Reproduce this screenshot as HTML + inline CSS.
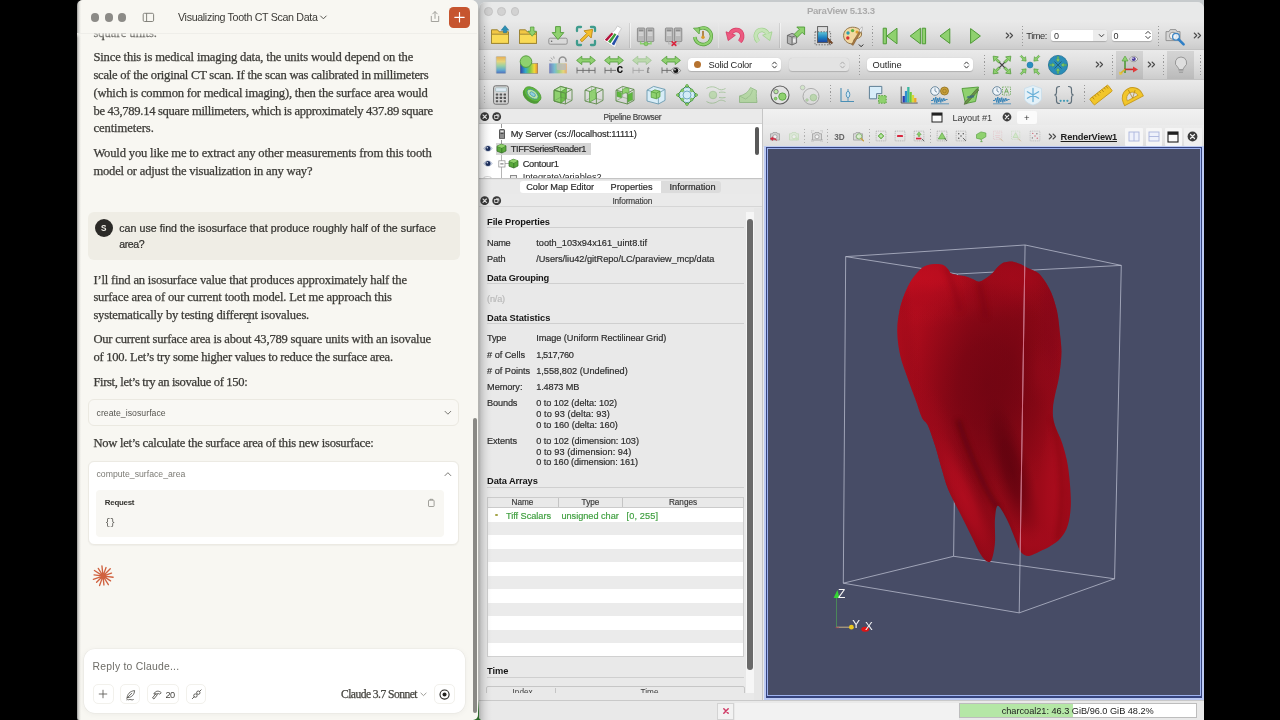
<!DOCTYPE html>
<html lang="en"><head><meta charset="utf-8"><title>Visualizing Tooth CT Scan Data</title>
<style>
html,body{margin:0;padding:0;background:#000;}
body{width:1280px;height:720px;position:relative;overflow:hidden;font-family:"Liberation Sans",sans-serif;}
.b{position:absolute;box-sizing:border-box;display:block;}
.t{position:absolute;white-space:pre;margin:0;}
</style></head><body><div id="root" style="position:absolute;left:0;top:0;width:1280px;height:720px;will-change:transform;">
<div class="b" style="left:470px;top:0px;width:734.2px;height:720px;background:linear-gradient(180deg,#c6cacc 0,#c6cacc 4px,#b4b4b1 12px,#b4b4b1 700px,#2f6b2c 712px,#2f6b2c 720px);"></div>
<div class="b" style="left:77px;top:0px;width:400.7px;height:720px;background:#f8f7f2;border-radius:6px 7px 5px 2px;"></div>
<div class="b" style="left:77px;top:0px;width:3.5px;height:720px;background:linear-gradient(90deg,rgba(60,60,60,0.5),rgba(90,90,90,0.18) 45%,rgba(0,0,0,0));border-radius:6px 0 0 2px;"></div>
<div class="t" style="left:93.40px;top:21px;font-family:'Liberation Serif', serif;font-size:12.6px;line-height:24px;color:#3b3a36;letter-spacing:-0.006px;-webkit-text-stroke:0.25px #3b3a36;">square units.</div>
<div class="t" style="left:93.40px;top:45px;font-family:'Liberation Serif', serif;font-size:12.6px;line-height:24px;color:#3b3a36;letter-spacing:-0.161px;-webkit-text-stroke:0.25px #3b3a36;">Since this is medical imaging data, the units would depend on the</div>
<div class="t" style="left:93.40px;top:63px;font-family:'Liberation Serif', serif;font-size:12.6px;line-height:24px;color:#3b3a36;letter-spacing:-0.235px;-webkit-text-stroke:0.25px #3b3a36;">scale of the original CT scan. If the scan was calibrated in millimeters</div>
<div class="t" style="left:93.40px;top:81px;font-family:'Liberation Serif', serif;font-size:12.6px;line-height:24px;color:#3b3a36;letter-spacing:-0.207px;-webkit-text-stroke:0.25px #3b3a36;">(which is common for medical imaging), then the surface area would</div>
<div class="t" style="left:93.40px;top:99px;font-family:'Liberation Serif', serif;font-size:12.6px;line-height:24px;color:#3b3a36;letter-spacing:-0.302px;-webkit-text-stroke:0.25px #3b3a36;">be 43,789.14 square millimeters, which is approximately 437.89 square</div>
<div class="t" style="left:93.40px;top:116px;font-family:'Liberation Serif', serif;font-size:12.6px;line-height:24px;color:#3b3a36;letter-spacing:-0.067px;-webkit-text-stroke:0.25px #3b3a36;">centimeters.</div>
<div class="t" style="left:93.40px;top:141px;font-family:'Liberation Serif', serif;font-size:12.6px;line-height:24px;color:#3b3a36;letter-spacing:-0.174px;-webkit-text-stroke:0.25px #3b3a36;">Would you like me to extract any other measurements from this tooth</div>
<div class="t" style="left:93.40px;top:159px;font-family:'Liberation Serif', serif;font-size:12.6px;line-height:24px;color:#3b3a36;letter-spacing:-0.211px;-webkit-text-stroke:0.25px #3b3a36;">model or adjust the visualization in any way?</div>
<div class="t" style="left:93.40px;top:268px;font-family:'Liberation Serif', serif;font-size:12.6px;line-height:24px;color:#3b3a36;letter-spacing:-0.194px;-webkit-text-stroke:0.25px #3b3a36;">I’ll find an isosurface value that produces approximately half the</div>
<div class="t" style="left:93.40px;top:285px;font-family:'Liberation Serif', serif;font-size:12.6px;line-height:24px;color:#3b3a36;letter-spacing:-0.169px;-webkit-text-stroke:0.25px #3b3a36;">surface area of our current tooth model. Let me approach this</div>
<div class="t" style="left:93.40px;top:303px;font-family:'Liberation Serif', serif;font-size:12.6px;line-height:24px;color:#3b3a36;letter-spacing:-0.180px;-webkit-text-stroke:0.25px #3b3a36;">systematically by testing different isovalues.</div>
<div class="t" style="left:93.40px;top:327px;font-family:'Liberation Serif', serif;font-size:12.6px;line-height:24px;color:#3b3a36;letter-spacing:-0.205px;-webkit-text-stroke:0.25px #3b3a36;">Our current surface area is about 43,789 square units with an isovalue</div>
<div class="t" style="left:93.40px;top:345px;font-family:'Liberation Serif', serif;font-size:12.6px;line-height:24px;color:#3b3a36;letter-spacing:-0.267px;-webkit-text-stroke:0.25px #3b3a36;">of 100. Let’s try some higher values to reduce the surface area.</div>
<div class="t" style="left:93.40px;top:370px;font-family:'Liberation Serif', serif;font-size:12.6px;line-height:24px;color:#3b3a36;letter-spacing:-0.360px;-webkit-text-stroke:0.25px #3b3a36;">First, let’s try an isovalue of 150:</div>
<div class="t" style="left:93.40px;top:431px;font-family:'Liberation Serif', serif;font-size:12.6px;line-height:24px;color:#3b3a36;letter-spacing:-0.256px;-webkit-text-stroke:0.25px #3b3a36;">Now let’s calculate the surface area of this new isosurface:</div>
<svg class="b" style="left:245px;top:312px;" width="8" height="12" viewBox="0 0 8 12"><path d="M2 1.5h4M4 1.5v9M2 10.5h4" stroke="#555" stroke-width="0.9" fill="none"/></svg>
<div class="b" style="left:77px;top:0px;width:400.7px;height:33.2px;background:#f8f7f2;border-radius:6px 7px 0 0;"></div>
<div class="b" style="left:77px;top:0px;width:3.5px;height:33.2px;background:linear-gradient(90deg,rgba(60,60,60,0.5),rgba(90,90,90,0.18) 45%,rgba(0,0,0,0));border-radius:6px 0 0 0;"></div>
<div class="b" style="left:77px;top:33.2px;width:400.5px;height:5px;background:linear-gradient(180deg,rgba(248,247,242,0.85),rgba(248,247,242,0));"></div>
<div class="b" style="left:78px;top:33px;width:399px;height:1.2px;background:linear-gradient(180deg,rgba(0,0,0,0.07),rgba(0,0,0,0.0));"></div>
<div class="b" style="left:91.30000000000001px;top:13.4px;width:8.2px;height:8.2px;background:#8c8b87;border-radius:50%;"></div>
<div class="b" style="left:104.5px;top:13.4px;width:8.2px;height:8.2px;background:#8c8b87;border-radius:50%;"></div>
<div class="b" style="left:117.9px;top:13.4px;width:8.2px;height:8.2px;background:#8c8b87;border-radius:50%;"></div>
<svg class="b" style="left:142px;top:11.5px;" width="13" height="11" viewBox="0 0 13 11"><rect x="1.2" y="1.3" width="10.4" height="8.2" rx="1.3" fill="none" stroke="#77766f" stroke-width="0.9"/><path d="M4.6 1.3v8.2" stroke="#77766f" stroke-width="0.9"/></svg>
<div class="t" style="left:178.00px;top:6px;font-family:'Liberation Sans', sans-serif;font-size:10.7px;line-height:22px;color:#3b3a36;letter-spacing:-0.341px;">Visualizing Tooth CT Scan Data</div>
<svg class="b" style="left:319px;top:14px;" width="9" height="7" viewBox="0 0 9 7"><path d="M1.6 2l2.8 2.8L7.2 2" stroke="#55544f" stroke-width="1" fill="none" stroke-linecap="round" stroke-linejoin="round"/></svg>
<svg class="b" style="left:429px;top:10px;" width="12" height="14" viewBox="0 0 12 14"><path d="M2.3 6.3v5.2h7.4V6.3M6 8.4V1.8M3.7 3.9L6 1.6l2.3 2.3" stroke="#9a9993" stroke-width="0.9" fill="none" stroke-linecap="round" stroke-linejoin="round"/></svg>
<div class="b" style="left:448.6px;top:7px;width:21px;height:20.5px;background:#c6552f;border-radius:4.5px;"></div>
<svg class="b" style="left:448.6px;top:7px;" width="21" height="20.5" viewBox="0 0 21 20.5"><path d="M10.5 5.6v9.4M5.8 10.3h9.4" stroke="#fff" stroke-width="1.15" stroke-linecap="round"/></svg>
<div class="b" style="left:88.2px;top:212.2px;width:371.5px;height:47.4px;background:#efede5;border-radius:6px;"></div>
<div class="b" style="left:94.7px;top:218.6px;width:18.3px;height:18.3px;background:#2b2a27;border-radius:50%;"></div>
<div class="t" style="left:101.12px;top:219px;font-family:'Liberation Sans', sans-serif;font-size:8.2px;line-height:19px;color:#f3f1ea;font-weight:700;">S</div>
<div class="t" style="left:119.20px;top:217px;font-family:'Liberation Sans', sans-serif;font-size:10.6px;line-height:22px;color:#2f2e2b;letter-spacing:0.060px;-webkit-text-stroke:0.2px #2f2e2b;">can use find the isosurface that produce roughly half of the surface</div>
<div class="t" style="left:119.20px;top:233px;font-family:'Liberation Sans', sans-serif;font-size:10.6px;line-height:22px;color:#2f2e2b;letter-spacing:-0.402px;-webkit-text-stroke:0.2px #2f2e2b;">area?</div>
<div class="b" style="left:88.2px;top:399.3px;width:371px;height:26.5px;background:#f9f8f4;border-radius:6px;border:0.8px solid #ebe9e1;"></div>
<div class="t" style="left:96.50px;top:403px;font-family:'Liberation Sans', sans-serif;font-size:8.7px;line-height:20px;color:#55544f;letter-spacing:0.037px;">create_isosurface</div>
<svg class="b" style="left:442.5px;top:409px;" width="10" height="8" viewBox="0 0 10 8"><path d="M2 2.3l2.9 2.9 2.9-2.9" stroke="#6b6a65" stroke-width="0.9" fill="none" stroke-linecap="round" stroke-linejoin="round"/></svg>
<div class="b" style="left:88.2px;top:461.2px;width:371px;height:84.3px;background:#ffffff;border-radius:6px;border:0.8px solid #eceae3;box-shadow:0 0.5px 1.5px rgba(0,0,0,0.04);"></div>
<div class="t" style="left:96.50px;top:464px;font-family:'Liberation Sans', sans-serif;font-size:8.7px;line-height:20px;color:#7b7a74;letter-spacing:0.001px;">compute_surface_area</div>
<svg class="b" style="left:442.5px;top:470px;" width="10" height="8" viewBox="0 0 10 8"><path d="M2 5.6l2.9-2.9 2.9 2.9" stroke="#6b6a65" stroke-width="0.9" fill="none" stroke-linecap="round" stroke-linejoin="round"/></svg>
<div class="b" style="left:95.8px;top:490.3px;width:347.8px;height:46.6px;background:#f8f7f3;border-radius:4px;"></div>
<div class="t" style="left:104.80px;top:493px;font-family:'Liberation Sans', sans-serif;font-size:7.9px;line-height:19px;color:#34332f;font-weight:700;letter-spacing:-0.249px;">Request</div>
<div class="t" style="left:105.00px;top:513px;font-family:'Liberation Mono', monospace;font-size:8.8px;line-height:20px;color:#4b4a45;letter-spacing:-0.181px;">{}</div>
<svg class="b" style="left:426.5px;top:497.5px;" width="9" height="10" viewBox="0 0 9 10"><rect x="1.5" y="2.2" width="5.6" height="6.3" rx="0.6" fill="none" stroke="#8b8a84" stroke-width="0.8"/><path d="M3 2.2v-0.9h2.6v0.9" fill="none" stroke="#8b8a84" stroke-width="0.8"/></svg>
<svg class="b" style="left:91.3px;top:564.3px;" width="24" height="24" viewBox="0 0 24 24"><path d="M13.19 12.14L22.13 13.22M13.01 12.65L19.58 16.85M12.63 13.02L17.36 20.68M12.13 13.19L12.94 20.95M11.59 13.13L8.56 21.60M11.14 12.84L5.59 18.31M10.86 12.39L2.35 15.29M10.81 11.86L3.06 10.92M10.99 11.35L3.41 6.51M11.37 10.98L7.27 4.34M11.87 10.81L10.94 1.86M12.41 10.87L15.04 3.53M12.86 11.16L19.27 4.84M13.14 11.61L20.52 9.09" stroke="#d0613f" stroke-width="1.35" stroke-linecap="round" fill="none"/><circle cx="12" cy="12" r="2" fill="#d0613f"/></svg>
<div class="b" style="left:84px;top:649.4px;width:381px;height:64px;background:#ffffff;border-radius:11px;box-shadow:0 1px 6px rgba(0,0,0,0.05),0 0 0 0.6px rgba(0,0,0,0.045);"></div>
<div class="t" style="left:92.60px;top:656px;font-family:'Liberation Sans', sans-serif;font-size:10.4px;line-height:21px;color:#6e6d67;letter-spacing:0.228px;">Reply to Claude...</div>
<div class="b" style="left:92.6px;top:683.8px;width:21.10000000000001px;height:20.3px;background:#fff;border-radius:5px;border:0.8px solid #f2f1ec;"></div>
<div class="b" style="left:119.5px;top:683.8px;width:20.80000000000001px;height:20.3px;background:#fff;border-radius:5px;border:0.8px solid #f2f1ec;"></div>
<div class="b" style="left:146.5px;top:683.8px;width:32.80000000000001px;height:20.3px;background:#fff;border-radius:5px;border:0.8px solid #f2f1ec;"></div>
<div class="b" style="left:185.9px;top:683.8px;width:20.5px;height:20.3px;background:#fff;border-radius:5px;border:0.8px solid #f2f1ec;"></div>
<div class="b" style="left:434.4px;top:683.8px;width:21.100000000000023px;height:20.3px;background:#fff;border-radius:5px;border:0.8px solid #f2f1ec;"></div>
<svg class="b" style="left:97.1px;top:688px;" width="12" height="12" viewBox="0 0 12 12"><path d="M6 2.2v7.600M2.200 6h7.600" stroke="#5a5954" stroke-width="0.85" stroke-linecap="round"/></svg>
<svg class="b" style="left:123.7px;top:687.6px;" width="13" height="13" viewBox="0 0 13 13"><path d="M3.1 9.7C3.3 6.400 5.500 3.200 10.600 2.600 10.400 6.200 8.200 9.200 4.300 9.600zM2.700 10.200L7.800 5.300M2.800 11.700c0.800-0.500 1.300 0.300 2.100 0s1.300-0.400 2.100 0 1.400 0.200 2.300-0.100" stroke="#4a4944" stroke-width="0.8" fill="none" stroke-linecap="round" stroke-linejoin="round"/></svg>
<svg class="b" style="left:150.3px;top:687.7px;" width="13" height="13" viewBox="0 0 13 13"><path d="M4 5.600C5.300 2.700 8.900 2.300 11.200 4.700L9.700 6.200C8.700 5.300 7.700 5.300 6.900 5.900zM6 5.500L2.500 9.900l1.400 1.100 3.500-4.400" stroke="#4a4944" stroke-width="0.85" fill="none" stroke-linecap="round" stroke-linejoin="round"/></svg>
<div class="t" style="left:165.60px;top:685px;font-family:'Liberation Sans', sans-serif;font-size:9.2px;line-height:20px;color:#45443f;letter-spacing:-0.617px;">20</div>
<svg class="b" style="left:190.2px;top:687.6px;" width="13" height="13" viewBox="0 0 13 13"><path d="M2.300 10.700l1.900-1.900M9.600 3.400l1.500-1.500" stroke="#4a4944" stroke-width="0.85" fill="none" stroke-linecap="round"/><circle cx="5.400" cy="7.600" r="1.700" fill="none" stroke="#4a4944" stroke-width="0.85"/><circle cx="8.300" cy="4.700" r="1.700" fill="none" stroke="#4a4944" stroke-width="0.85"/></svg>
<div class="t" style="left:341.00px;top:683px;font-family:'Liberation Serif', serif;font-size:11.6px;line-height:23px;color:#45443f;letter-spacing:-0.556px;-webkit-text-stroke:0.25px #45443f;">Claude 3.7 Sonnet</div>
<svg class="b" style="left:418.6px;top:690.5px;" width="9" height="7" viewBox="0 0 9 7"><path d="M1.9 2.1l2.6 2.5 2.6-2.5" stroke="#8b8a84" stroke-width="0.85" fill="none" stroke-linecap="round" stroke-linejoin="round"/></svg>
<svg class="b" style="left:437.9px;top:687.6px;" width="13" height="13" viewBox="0 0 13 13"><circle cx="6.55" cy="6.55" r="4.55" fill="none" stroke="#23221f" stroke-width="1.1"/><circle cx="6.55" cy="6.55" r="2" fill="#23221f"/></svg>
<div class="b" style="left:472.7px;top:418.2px;width:4px;height:294.5px;background:#8a8985;border-radius:2px;"></div>
<div class="b" style="left:479.2px;top:2px;width:725.0px;height:718px;background:#e9e9e9;border-radius:7px 7px 0 4px;"></div>
<div class="b" style="left:479.2px;top:2px;width:725.0px;height:20px;background:#e8e9e9;border-radius:7px 7px 0 0;"></div>
<div class="b" style="left:483.90000000000003px;top:7.199999999999999px;width:8.8px;height:8.8px;background:#d2d2d2;border-radius:50%;border:0.5px solid #c4c4c4;"></div>
<div class="b" style="left:497.20000000000005px;top:7.199999999999999px;width:8.8px;height:8.8px;background:#d2d2d2;border-radius:50%;border:0.5px solid #c4c4c4;"></div>
<div class="b" style="left:510.6px;top:7.199999999999999px;width:8.8px;height:8.8px;background:#d2d2d2;border-radius:50%;border:0.5px solid #c4c4c4;"></div>
<div class="t" style="left:806.90px;top:0px;font-family:'Liberation Sans', sans-serif;font-size:9.6px;line-height:21px;color:#ababab;font-weight:700;letter-spacing:-0.266px;">ParaView 5.13.3</div>
<div class="b" style="left:479.2px;top:20px;width:725.0px;height:30px;background:linear-gradient(180deg,#eaeaea 0%,#e2e2e2 35%,#d5d5d5 75%,#cbcbcb 100%);"></div>
<div class="b" style="left:479.2px;top:49.2px;width:725.0px;height:0.8px;background:#c2c2c2;"></div>
<div class="b" style="left:479.2px;top:50px;width:725.0px;height:30px;background:linear-gradient(180deg,#eaeaea 0%,#e2e2e2 35%,#d5d5d5 75%,#cbcbcb 100%);"></div>
<div class="b" style="left:479.2px;top:79.2px;width:725.0px;height:0.8px;background:#c2c2c2;"></div>
<div class="b" style="left:479.2px;top:80px;width:725.0px;height:29px;background:linear-gradient(180deg,#eaeaea 0%,#e2e2e2 35%,#d5d5d5 75%,#cbcbcb 100%);"></div>
<div class="b" style="left:479.2px;top:108.2px;width:725.0px;height:0.8px;background:#c2c2c2;"></div>
<div class="b" style="left:483.7px;top:26px;width:1.2px;height:18px;background-image:repeating-linear-gradient(180deg,#b5b5b5 0 1.2px,transparent 1.2px 3.2px);"></div>
<div class="b" style="left:483.7px;top:56px;width:1.2px;height:18px;background-image:repeating-linear-gradient(180deg,#b5b5b5 0 1.2px,transparent 1.2px 3.2px);"></div>
<div class="b" style="left:483.7px;top:86px;width:1.2px;height:17px;background-image:repeating-linear-gradient(180deg,#b5b5b5 0 1.2px,transparent 1.2px 3.2px);"></div>
<div class="b" style="left:629.0px;top:23px;width:0.8px;height:25px;background:rgba(0,0,0,0.09);"></div>
<div class="b" style="left:629.8px;top:23px;width:0.8px;height:25px;background:rgba(255,255,255,0.5);"></div>
<div class="b" style="left:717.6px;top:23px;width:0.8px;height:25px;background:rgba(0,0,0,0.09);"></div>
<div class="b" style="left:718.4px;top:23px;width:0.8px;height:25px;background:rgba(255,255,255,0.5);"></div>
<div class="b" style="left:779.3000000000001px;top:23px;width:0.8px;height:25px;background:rgba(0,0,0,0.09);"></div>
<div class="b" style="left:780.1px;top:23px;width:0.8px;height:25px;background:rgba(255,255,255,0.5);"></div>
<div class="b" style="left:872.0px;top:26px;width:1.2px;height:20px;background-image:repeating-linear-gradient(180deg,#9a9a9a 0 1.2px,transparent 1.2px 3.2px);"></div>
<div class="b" style="left:1021.8px;top:26px;width:1.2px;height:20px;background-image:repeating-linear-gradient(180deg,#9a9a9a 0 1.2px,transparent 1.2px 3.2px);"></div>
<div class="b" style="left:1158.1px;top:26px;width:1.2px;height:20px;background-image:repeating-linear-gradient(180deg,#9a9a9a 0 1.2px,transparent 1.2px 3.2px);"></div>
<div class="b" style="left:858.9px;top:55px;width:1.2px;height:20px;background-image:repeating-linear-gradient(180deg,#9a9a9a 0 1.2px,transparent 1.2px 3.2px);"></div>
<div class="b" style="left:983.8px;top:55px;width:1.2px;height:20px;background-image:repeating-linear-gradient(180deg,#9a9a9a 0 1.2px,transparent 1.2px 3.2px);"></div>
<div class="b" style="left:1112.2px;top:55px;width:1.2px;height:20px;background-image:repeating-linear-gradient(180deg,#9a9a9a 0 1.2px,transparent 1.2px 3.2px);"></div>
<div class="b" style="left:1163.1px;top:55px;width:1.2px;height:20px;background-image:repeating-linear-gradient(180deg,#9a9a9a 0 1.2px,transparent 1.2px 3.2px);"></div>
<div class="b" style="left:1200.3px;top:55px;width:1.2px;height:20px;background-image:repeating-linear-gradient(180deg,#9a9a9a 0 1.2px,transparent 1.2px 3.2px);"></div>
<div class="b" style="left:830.2px;top:85px;width:1.2px;height:19px;background-image:repeating-linear-gradient(180deg,#9a9a9a 0 1.2px,transparent 1.2px 3.2px);"></div>
<div class="b" style="left:1083.7px;top:85px;width:1.2px;height:19px;background-image:repeating-linear-gradient(180deg,#9a9a9a 0 1.2px,transparent 1.2px 3.2px);"></div>
<div class="b" style="left:1115.5px;top:51px;width:27.8px;height:28px;background:rgba(0,0,0,0.09);"></div>
<div class="b" style="left:1167.4px;top:51px;width:26.2px;height:28px;background:rgba(0,0,0,0.09);"></div>
<div class="b" style="left:688.4px;top:58px;width:92.20000000000005px;height:13px;background:#ffffff;border-radius:3.5px;box-shadow:0 0.5px 1px rgba(0,0,0,0.18);"></div>
<svg class="b" style="left:770.8000000000001px;top:59.5px;" width="7" height="10" viewBox="0 0 7 10"><path d="M1.5 4L3.5 1.9 5.5 4M1.5 6L3.5 8.1 5.5 6" stroke="#333" stroke-width="0.95" fill="none" stroke-linecap="round" stroke-linejoin="round"/></svg>
<div class="b" style="left:694.0px;top:61.0px;width:7px;height:7px;background:#b5722f;border-radius:50%;"></div>
<div class="t" style="left:708.40px;top:55px;font-family:'Liberation Sans', sans-serif;font-size:9.3px;line-height:20px;color:#262626;letter-spacing:-0.171px;">Solid Color</div>
<div class="b" style="left:789px;top:58px;width:59.700000000000045px;height:13px;background:#e3e3e3;border-radius:3.5px;box-shadow:0 0.5px 1px rgba(0,0,0,0.18);"></div>
<svg class="b" style="left:838.9000000000001px;top:59.5px;" width="7" height="10" viewBox="0 0 7 10"><path d="M1.5 4L3.5 1.9 5.5 4M1.5 6L3.5 8.1 5.5 6" stroke="#aaa" stroke-width="0.95" fill="none" stroke-linecap="round" stroke-linejoin="round"/></svg>
<div class="b" style="left:866.5px;top:58px;width:106.20000000000005px;height:13px;background:#ffffff;border-radius:3.5px;box-shadow:0 0.5px 1px rgba(0,0,0,0.18);"></div>
<svg class="b" style="left:962.9000000000001px;top:59.5px;" width="7" height="10" viewBox="0 0 7 10"><path d="M1.5 4L3.5 1.9 5.5 4M1.5 6L3.5 8.1 5.5 6" stroke="#333" stroke-width="0.95" fill="none" stroke-linecap="round" stroke-linejoin="round"/></svg>
<div class="t" style="left:872.50px;top:55px;font-family:'Liberation Sans', sans-serif;font-size:9.3px;line-height:20px;color:#262626;letter-spacing:-0.067px;">Outline</div>
<div class="t" style="left:1026.30px;top:26px;font-family:'Liberation Sans', sans-serif;font-size:9.3px;line-height:20px;color:#333;letter-spacing:-0.441px;">Time:</div>
<div class="b" style="left:1051.4px;top:29.5px;width:55.8px;height:11.2px;background:#fff;border-radius:2.5px;box-shadow:0 0.5px 1px rgba(0,0,0,0.2);"></div>
<div class="b" style="left:1092.5px;top:29.5px;width:14.7px;height:11.2px;background:#ececec;border-radius:0 2.5px 2.5px 0;"></div>
<svg class="b" style="left:1097.8px;top:32.5px;" width="7" height="6" viewBox="0 0 7 6"><path d="M1.3 1.6l2.2 2.2 2.2-2.2" stroke="#333" stroke-width="0.95" fill="none" stroke-linecap="round" stroke-linejoin="round"/></svg>
<div class="t" style="left:1054.00px;top:26px;font-family:'Liberation Sans', sans-serif;font-size:9px;line-height:20px;color:#333;">0</div>
<div class="b" style="left:1111.6px;top:29.5px;width:40.6px;height:11.2px;background:#fff;border-radius:2.5px;box-shadow:0 0.5px 1px rgba(0,0,0,0.2);"></div>
<div class="t" style="left:1113.50px;top:26px;font-family:'Liberation Sans', sans-serif;font-size:9px;line-height:20px;color:#333;">0</div>
<svg class="b" style="left:1143.5px;top:29px;" width="8" height="12" viewBox="0 0 8 12"><path d="M1.8 4.6L4 2.4l2.2 2.2M1.8 7.4L4 9.6l2.2-2.2" stroke="#333" stroke-width="0.95" fill="none" stroke-linecap="round" stroke-linejoin="round"/></svg>
<svg class="b" style="left:1005.3px;top:31.700000000000003px;" width="9" height="7" viewBox="0 0 9 7"><path d="M1.2 1l2.6 2.5L1.2 6M5 1l2.6 2.5L5 6" stroke="#4a4a4a" stroke-width="1.05" fill="none" stroke-linecap="round" stroke-linejoin="round"/></svg>
<svg class="b" style="left:1192.5px;top:31.700000000000003px;" width="9" height="7" viewBox="0 0 9 7"><path d="M1.2 1l2.6 2.5L1.2 6M5 1l2.6 2.5L5 6" stroke="#4a4a4a" stroke-width="1.05" fill="none" stroke-linecap="round" stroke-linejoin="round"/></svg>
<svg class="b" style="left:1095.0px;top:61.3px;" width="9" height="7" viewBox="0 0 9 7"><path d="M1.2 1l2.6 2.5L1.2 6M5 1l2.6 2.5L5 6" stroke="#4a4a4a" stroke-width="1.05" fill="none" stroke-linecap="round" stroke-linejoin="round"/></svg>
<svg class="b" style="left:1146.5px;top:61.3px;" width="9" height="7" viewBox="0 0 9 7"><path d="M1.2 1l2.6 2.5L1.2 6M5 1l2.6 2.5L5 6" stroke="#4a4a4a" stroke-width="1.05" fill="none" stroke-linecap="round" stroke-linejoin="round"/></svg>
<div class="b" style="left:763px;top:109px;width:441.20000000000005px;height:16.4px;background:linear-gradient(180deg,#f1f1f1,#e9e9e9);"></div>
<div class="b" style="left:763px;top:125.4px;width:441.20000000000005px;height:21.6px;background:linear-gradient(180deg,#ececec,#dedede);"></div>
<svg class="b" style="left:931px;top:111.5px;" width="12" height="11" viewBox="0 0 12 11"><rect x="1" y="1" width="10" height="9" fill="#fafafa" stroke="#222" stroke-width="1"/><rect x="1" y="1" width="10" height="2.6" fill="#222"/></svg>
<div class="t" style="left:952.50px;top:108px;font-family:'Liberation Sans', sans-serif;font-size:9.2px;line-height:20px;color:#3a3a3a;letter-spacing:-0.095px;">Layout #1</div>
<svg class="b" style="left:1002px;top:112px;" width="10" height="10" viewBox="0 0 10 10"><circle cx="5" cy="5" r="4.4" fill="#3d3d3d"/><path d="M3.2 3.2l3.6 3.6M6.8 3.2L3.2 6.8" stroke="#eee" stroke-width="1.1" stroke-linecap="round"/></svg>
<div class="b" style="left:1017px;top:110.5px;width:19.5px;height:13.7px;background:#fbfbfb;border-radius:2px;"></div>
<div class="t" style="left:1024.02px;top:107px;font-family:'Liberation Sans', sans-serif;font-size:9.5px;line-height:21px;color:#333;">+</div>
<svg class="b" style="left:1048.0px;top:133.2px;" width="9" height="7" viewBox="0 0 9 7"><path d="M1.2 1l2.6 2.5L1.2 6M5 1l2.6 2.5L5 6" stroke="#4a4a4a" stroke-width="1.05" fill="none" stroke-linecap="round" stroke-linejoin="round"/></svg>
<div class="b" style="left:804.25px;top:129px;width:1.2px;height:15px;background-image:repeating-linear-gradient(180deg,#b0b0b0 0 1.2px,transparent 1.2px 3.2px);"></div>
<div class="b" style="left:826.75px;top:129px;width:1.2px;height:15px;background-image:repeating-linear-gradient(180deg,#b0b0b0 0 1.2px,transparent 1.2px 3.2px);"></div>
<div class="b" style="left:868.9px;top:129px;width:1.2px;height:15px;background-image:repeating-linear-gradient(180deg,#b0b0b0 0 1.2px,transparent 1.2px 3.2px);"></div>
<div class="b" style="left:929.9px;top:129px;width:1.2px;height:15px;background-image:repeating-linear-gradient(180deg,#b0b0b0 0 1.2px,transparent 1.2px 3.2px);"></div>
<div class="t" style="left:1060.60px;top:127px;font-family:'Liberation Sans', sans-serif;font-size:9.3px;line-height:20px;color:#1d1d1d;font-weight:700;letter-spacing:-0.167px;text-decoration:underline;text-underline-offset:1.2px;">RenderView1</div>
<div class="b" style="left:1125.4px;top:127.5px;width:17.9px;height:18.5px;background:#f6f6f6;border-radius:1px;"></div>
<svg class="b" style="left:1128.3px;top:131.3px;" width="12" height="11" viewBox="0 0 12 11"><rect x="1" y="1" width="10" height="9" fill="#eef1fb" stroke="#a9b4dc" stroke-width="0.9"/><path d="M6 1v9" stroke="#a9b4dc" stroke-width="0.9"/></svg>
<div class="b" style="left:1145.5px;top:127.5px;width:16.8px;height:18.5px;background:#f6f6f6;border-radius:1px;"></div>
<svg class="b" style="left:1147.9px;top:131.3px;" width="12" height="11" viewBox="0 0 12 11"><rect x="1" y="1" width="10" height="9" fill="#eef1fb" stroke="#a9b4dc" stroke-width="0.9"/><path d="M1 5.5h10" stroke="#a9b4dc" stroke-width="0.9"/></svg>
<div class="b" style="left:1164.5px;top:127.5px;width:17px;height:18.5px;background:#f6f6f6;border-radius:1px;"></div>
<svg class="b" style="left:1167px;top:130.7px;" width="12" height="12" viewBox="0 0 12 12"><rect x="1" y="1" width="10" height="10" fill="#fafafa" stroke="#1e1e1e" stroke-width="1.1"/><rect x="1" y="1" width="10" height="2.8" fill="#1e1e1e"/></svg>
<div class="b" style="left:1184px;top:127.5px;width:17.5px;height:18.5px;background:#f0f0f0;border-radius:1px;"></div>
<svg class="b" style="left:1187.2px;top:131.4px;" width="11" height="11" viewBox="0 0 11 11"><circle cx="5.5" cy="5.5" r="4.9" fill="#3d3d3d"/><path d="M3.5 3.5l4 4M7.5 3.5l-4 4" stroke="#eee" stroke-width="1.2" stroke-linecap="round"/></svg>
<div class="b" style="left:479.2px;top:699.6px;width:725.0px;height:20.4px;background:#e9e9e9;border-radius:0 0 0 4px;border-top:0.8px solid #c9c9c9;"></div>
<div class="b" style="left:717.4px;top:703px;width:16.4px;height:17px;background:#f2f2f2;border:0.6px solid #d3d3d3;"></div>
<svg class="b" style="left:721.6px;top:706.7px;" width="8" height="8" viewBox="0 0 8 8"><path d="M1.8 1.8l4.4 4.4M6.2 1.8L1.8 6.2" stroke="#cf3b66" stroke-width="1.5" stroke-linecap="round"/></svg>
<div class="b" style="left:734.5px;top:703px;width:224px;height:17px;background:#f2f2f2;"></div>
<div class="b" style="left:959.2px;top:703.3px;width:237.5px;height:14.7px;background:#ffffff;border:0.7px solid #bdbdbd;"></div>
<div class="b" style="left:959.9px;top:704px;width:113.4px;height:13.3px;background:#b5e7a6;"></div>
<div class="t" style="left:1001.70px;top:701px;font-family:'Liberation Sans', sans-serif;font-size:9.2px;line-height:20px;color:#1b1b1b;letter-spacing:-0.019px;">charcoal21: 46.3 GiB/96.0 GiB 48.2%</div>
<svg class="b" style="left:490.0px;top:24.6px;overflow:visible;" width="22" height="22" viewBox="0 0 22 22"><path d="M1.5 4.8h6l1.6 2h9.400v11.600H1.500z" fill="#f2c744" stroke="#9a8232" stroke-width="1" stroke-linejoin="round"/><path d="M1.500 18.400V9.200h17v9.200z" fill="#f9da55" stroke="#9a8232" stroke-width="0.9" stroke-linejoin="round"/><path d="M15 0.600l3.800 4.600h-2.200v2.600h-3.200V5.200h-2.200z" fill="#2d8fb3" stroke="#1d6f90" stroke-width="0.5"/></svg>
<svg class="b" style="left:518.0px;top:24.6px;overflow:visible;" width="22" height="22" viewBox="0 0 22 22"><path d="M1.5 4.8h6l1.6 2h9.400v11.600H1.500z" fill="#f2c744" stroke="#9a8232" stroke-width="1" stroke-linejoin="round"/><path d="M1.500 18.400V9.200h17v9.200z" fill="#f9da55" stroke="#9a8232" stroke-width="0.9" stroke-linejoin="round"/><path d="M12.4 2h3.6v4.2h2.4l-4.2 5-4.2-5h2.4z" fill="#8fd16f" stroke="#4f9a37" stroke-width="0.7" stroke-linejoin="round"/></svg>
<svg class="b" style="left:546.5px;top:24.6px;overflow:visible;" width="22" height="22" viewBox="0 0 22 22"><rect x="1.8" y="13.2" width="18.4" height="6" rx="1.4" fill="#d9d9d9" stroke="#8b8b8b" stroke-width="0.9"/><circle cx="4.6" cy="16.2" r="0.8" fill="#666"/><path d="M8.6 1.6h4.8v6h3.4L11 14.6 5.2 7.6h3.4z" fill="#8fd16f" stroke="#4f9a37" stroke-width="0.9" stroke-linejoin="round"/></svg>
<svg class="b" style="left:574.7px;top:24.6px;overflow:visible;" width="22" height="22" viewBox="0 0 22 22"><path d="M2 6V3.4C2 2.5 2.5 2 3.4 2H6M16 2h2.6c0.9 0 1.4 0.5 1.4 1.4V6M20 16v2.6c0 0.9-0.5 1.4-1.4 1.4H16M6 20H3.4C2.5 20 2 19.5 2 18.600V16" fill="none" stroke="#3f9c8d" stroke-width="2.3" stroke-linecap="round"/><path d="M5.2 15l6.500-6.500-2.700-2.700 8.600-1.400-1.400 8.600-2.700-2.700-6.500 6.500z" fill="#f5be2b" stroke="#b98716" stroke-width="0.9" stroke-linejoin="round"/></svg>
<svg class="b" style="left:602.5px;top:24.6px;overflow:visible;" width="22" height="22" viewBox="0 0 22 22"><g transform="rotate(32 11 11)"><path d="M8.600 0.6h4.800v5.200l4.400 12.600c0.400 1.200-0.200 2-1.400 2H5.600c-1.200 0-1.800-0.800-1.400-2L8.600 5.800z" fill="#ffffff" stroke="#c9c9c9" stroke-width="0.8"/><path d="M7.200 9.500l-2 9.600h2.600l1.500-9.600z" fill="#b3113a"/><path d="M10 8.500l-0.900 10.600h2.800l0.400-10.600z" fill="#3d9f3a"/><path d="M13.200 8.500l0.100 10.600h2.900l-1-10.600z" fill="#2650a8"/></g></svg>
<svg class="b" style="left:635.0px;top:24.6px;overflow:visible;" width="22" height="22" viewBox="0 0 22 22"><rect x="2.4" y="3" width="7.4" height="13.600" rx="0.8" fill="#b9b9b9" stroke="#7d7d7d" stroke-width="0.8"/><rect x="3.8" y="4.600" width="4.600" height="1.500" fill="#8c8c8c"/><rect x="3.8" y="7.400" width="4.600" height="1.100" fill="#e3e3e3"/><rect x="3.8" y="9.500" width="4.600" height="1.100" fill="#e3e3e3"/><rect x="11.4" y="3" width="7.4" height="13.600" rx="0.8" fill="#b9b9b9" stroke="#7d7d7d" stroke-width="0.8"/><rect x="12.8" y="4.600" width="4.600" height="1.500" fill="#8c8c8c"/><rect x="12.8" y="7.400" width="4.600" height="1.100" fill="#e3e3e3"/><rect x="12.8" y="9.500" width="4.600" height="1.100" fill="#e3e3e3"/><path d="M5.600 16.600v2.200h10.400v-2.200" fill="none" stroke="#8ccf72" stroke-width="1.4"/><circle cx="11" cy="18.800" r="2" fill="#8fd16f" stroke="#4f9a37" stroke-width="0.5"/></svg>
<svg class="b" style="left:663.4px;top:24.6px;overflow:visible;" width="22" height="22" viewBox="0 0 22 22"><rect x="2.4" y="3" width="7.4" height="13.600" rx="0.8" fill="#b9b9b9" stroke="#7d7d7d" stroke-width="0.8"/><rect x="3.8" y="4.600" width="4.600" height="1.500" fill="#8c8c8c"/><rect x="3.8" y="7.400" width="4.600" height="1.100" fill="#e3e3e3"/><rect x="3.8" y="9.500" width="4.600" height="1.100" fill="#e3e3e3"/><rect x="11.4" y="3" width="7.4" height="13.600" rx="0.8" fill="#b9b9b9" stroke="#7d7d7d" stroke-width="0.8"/><rect x="12.8" y="4.600" width="4.600" height="1.500" fill="#8c8c8c"/><rect x="12.8" y="7.400" width="4.600" height="1.100" fill="#e3e3e3"/><rect x="12.8" y="9.500" width="4.600" height="1.100" fill="#e3e3e3"/><path d="M5.600 16.600v2.200h10.400v-2.200" fill="none" stroke="#b9b9b9" stroke-width="1.200"/><path d="M9.200 16.800l3.600 3.600M12.800 16.800l-3.600 3.600" stroke="#d9263f" stroke-width="1.700" stroke-linecap="round"/></svg>
<svg class="b" style="left:691.6px;top:24.6px;overflow:visible;" width="22" height="22" viewBox="0 0 22 22"><path d="M5.300 5.200A8.300 8.300 0 1 1 2.800 12" fill="none" stroke="#4f9a37" stroke-width="3.400"/><path d="M5.300 5.200A8.300 8.300 0 1 1 2.800 12" fill="none" stroke="#8fd16f" stroke-width="2.200"/><path d="M1.400 3.200l6.400-0.400-0.600 6.200z" fill="#8fd16f" stroke="#4f9a37" stroke-width="0.7" stroke-linejoin="round"/><path d="M11 6.500v5" stroke="#a06a1c" stroke-width="1.500" stroke-linecap="round"/><circle cx="11" cy="12.200" r="1.700" fill="#d99a2b"/></svg>
<svg class="b" style="left:724.0px;top:24.6px;overflow:visible;" width="22" height="22" viewBox="0 0 22 22"><path d="M15.800 16.600C20.600 11.200 17.600 4.300 11.400 5C9 5.300 7.400 6.800 6.400 8.800" fill="none" stroke="#d43a62" stroke-width="4.400" stroke-linecap="butt"/><path d="M2 6.800l9.400 3.400-7.200 5.400z" fill="#ec5a80" stroke="#d43a62" stroke-width="0.8" stroke-linejoin="round"/><path d="M15.800 16.600C20.600 11.200 17.600 4.300 11.400 5C9 5.300 7.400 6.800 6.400 8.800" fill="none" stroke="#ec5a80" stroke-width="3.200" stroke-linecap="butt"/></svg>
<svg class="b" style="left:752.4px;top:24.6px;opacity:0.9;overflow:visible;" width="22" height="22" viewBox="0 0 22 22"><g transform="translate(22 0) scale(-1 1)"><path d="M15.800 16.600C20.600 11.200 17.600 4.300 11.400 5C9 5.300 7.400 6.800 6.400 8.800" fill="none" stroke="#98cf83" stroke-width="4.400" stroke-linecap="butt"/><path d="M2 6.800l9.400 3.400-7.200 5.400z" fill="#c3e5b3" stroke="#98cf83" stroke-width="0.8" stroke-linejoin="round"/><path d="M15.800 16.600C20.600 11.200 17.600 4.300 11.400 5C9 5.300 7.400 6.800 6.400 8.800" fill="none" stroke="#c3e5b3" stroke-width="3.200" stroke-linecap="butt"/></g></svg>
<svg class="b" style="left:784.6px;top:24.6px;overflow:visible;" width="22" height="22" viewBox="0 0 22 22"><path d="M2.400 10.400l4.600-2 4.600 1.600v8l-4.600 2-4.600-1.800z" fill="#b5b5b5" stroke="#5c5c5c" stroke-width="0.8" stroke-linejoin="round"/><path d="M2.400 10.400l4.600 1.700 4.600-1.700M7 12.100V20" fill="none" stroke="#5c5c5c" stroke-width="0.8"/><rect x="8" y="13.500" width="2.600" height="4" fill="#ececec"/><path d="M9.200 9.400l5-5-2.400-2.400h7.800v7.800l-2.400-2.400-5 5z" fill="#8fd16f" stroke="#4f9a37" stroke-width="0.9" stroke-linejoin="round"/></svg>
<svg class="b" style="left:812.8px;top:24.6px;overflow:visible;" width="22" height="22" viewBox="0 0 22 22"><defs><linearGradient id="cb1" x1="0" y1="0" x2="0" y2="1"><stop offset="0" stop-color="#dcdcdc"/><stop offset="0.3" stop-color="#dcdcdc"/><stop offset="0.34" stop-color="#5fc3d6"/><stop offset="0.7" stop-color="#1a7fc0"/><stop offset="1" stop-color="#1c3fa0"/></linearGradient></defs><rect x="4.600" y="1.600" width="10" height="16" fill="url(#cb1)" stroke="#555" stroke-width="0.9"/><rect x="2" y="6.800" width="15.600" height="13" fill="none" stroke="#555" stroke-width="0.8" stroke-dasharray="1.400 1.400"/><path d="M14.600 12.600l5.200 5.200-1.200 1.200-1.800-1.800-0.600 2.400z" fill="#7a4a2a" stroke="#4a2a12" stroke-width="0.4"/></svg>
<svg class="b" style="left:841.8px;top:24.6px;overflow:visible;" width="22" height="22" viewBox="0 0 22 22"><path d="M10.600 2.200c-5.200 0-9 3.600-9 8.400 0 4.600 3.800 8.200 8 8.200 2.200 0 2.800-1.200 2.400-2.600-0.400-1.600 0.600-2.800 2.400-2.800 3.200 0 5.200-1.600 5.200-4.400 0-4-4-6.800-9-6.800z" fill="#f2d8a0" stroke="#8a6a3a" stroke-width="0.9"/><circle cx="6" cy="8" r="1.700" fill="#2d9fb0"/><circle cx="10.600" cy="5.600" r="1.700" fill="#5cb040"/><circle cx="5.800" cy="13" r="1.700" fill="#d93030"/><circle cx="15" cy="7" r="1.500" fill="#e0a030"/><path d="M9.500 19.500l7.800-13.500 1.600 0.900-7.800 13.500z" fill="#a87a45" stroke="#6a4a22" stroke-width="0.4"/><path d="M17.200 6.200c0.400-2 1.600-3.600 3-4.400 0.400 1.600 0 3.800-1.400 5.400z" fill="#f6f6f6" stroke="#888" stroke-width="0.5"/><path d="M17.200 19.800l1.900 1.900 1.900-1.900" fill="none" stroke="#222" stroke-width="1" stroke-linecap="round" stroke-linejoin="round"/></svg>
<svg class="b" style="left:878.4px;top:24.6px;overflow:visible;" width="22" height="22" viewBox="0 0 22 22"><path d="M5.200 3.200h3.200v15.600H5.200z" fill="#8fd16f" stroke="#4f9a37" stroke-width="1" stroke-linejoin="round"/><path d="M19 3.200v15.600L8.800 11z" fill="#8fd16f" stroke="#4f9a37" stroke-width="1" stroke-linejoin="round"/></svg>
<svg class="b" style="left:907.4px;top:24.6px;overflow:visible;" width="22" height="22" viewBox="0 0 22 22"><path d="M13.400 3.200v15.600L3.200 11z" fill="#8fd16f" stroke="#4f9a37" stroke-width="1" stroke-linejoin="round"/><path d="M15.200 3.200h3.400v15.600h-3.400z" fill="#8fd16f" stroke="#4f9a37" stroke-width="1" stroke-linejoin="round"/></svg>
<svg class="b" style="left:933.9px;top:24.6px;overflow:visible;" width="22" height="22" viewBox="0 0 22 22"><path d="M15.800 3.600v14.800L6 11z" fill="#8fd16f" stroke="#4f9a37" stroke-width="1" stroke-linejoin="round"/></svg>
<svg class="b" style="left:963.8px;top:24.6px;overflow:visible;" width="22" height="22" viewBox="0 0 22 22"><path d="M6.600 3.600v14.800L16.400 11z" fill="#8fd16f" stroke="#4f9a37" stroke-width="1" stroke-linejoin="round"/></svg>
<svg class="b" style="left:1164.0px;top:24.6px;overflow:visible;" width="22" height="22" viewBox="0 0 22 22"><path d="M2 6.600h3l1.200-2h5.600l1.200 2h3v9H2z" fill="#d6d6d6" stroke="#8b8b8b" stroke-width="0.9" stroke-linejoin="round"/><circle cx="9" cy="10.800" r="3.600" fill="#f3f3f3" stroke="#8b8b8b" stroke-width="0.9"/><circle cx="12" cy="11.800" r="3.400" fill="#e9f3fb" fill-opacity="0.8" stroke="#3e86c4" stroke-width="1.300"/><path d="M14.600 14.400l5 5" stroke="#2f7fc6" stroke-width="2.600" stroke-linecap="round"/></svg>
<svg class="b" style="left:490.0px;top:53.7px;opacity:0.85;overflow:visible;" width="22" height="22" viewBox="0 0 22 22"><defs><linearGradient id="rb1" x1="0" y1="0" x2="0" y2="1"><stop offset="0" stop-color="#e9a23a"/><stop offset="0.3" stop-color="#e6d36a"/><stop offset="0.55" stop-color="#8fcf9a"/><stop offset="0.8" stop-color="#4da0d0"/><stop offset="1" stop-color="#3a59b5"/></linearGradient><linearGradient id="rb2" x1="0" y1="0" x2="1" y2="0"><stop offset="0" stop-color="#2d3fa8"/><stop offset="0.3" stop-color="#33a8c9"/><stop offset="0.55" stop-color="#79c84a"/><stop offset="0.8" stop-color="#f0d83a"/><stop offset="1" stop-color="#e98a2a"/></linearGradient></defs><rect x="6.200" y="2.400" width="9.600" height="17.200" rx="0.800" fill="url(#rb1)" stroke="#9aa" stroke-width="0.5"/></svg>
<svg class="b" style="left:518.0px;top:53.7px;overflow:visible;" width="22" height="22" viewBox="0 0 22 22"><rect x="2.200" y="9.400" width="17.600" height="10" fill="url(#rb2)" stroke="#666" stroke-width="0.4"/><circle cx="8" cy="7.600" r="5.800" fill="#8fd16f" stroke="#4f9a37" stroke-width="0.9"/></svg>
<svg class="b" style="left:546.5px;top:53.7px;opacity:0.9;overflow:visible;" width="22" height="22" viewBox="0 0 22 22"><rect x="2.200" y="9.400" width="17.600" height="10" fill="url(#rb2)" opacity="0.65"/><path d="M12.200 9.400V6.400a3.400 3.400 0 0 1 6.800 0v1.400" fill="none" stroke="#8a8a8a" stroke-width="1.500"/><rect x="9.800" y="9.400" width="9.200" height="6.600" rx="1" fill="#b9b9b9" opacity="0.85"/><path d="M4 3.600l1.600 2M2.400 6.400l2.200 0.800M6.600 2.400l0.600 2.200" stroke="#8a8a8a" stroke-width="0.800"/></svg>
<svg class="b" style="left:574.7px;top:53.7px;overflow:visible;" width="22" height="22" viewBox="0 0 22 22"><path d="M1.600 6.400l5.200-4.200v2.600h8.400V2.200l5.200 4.200-5.200 4.200V8h-8.400v2.600z" fill="#8fd16f" stroke="#4f9a37" stroke-width="0.8" stroke-linejoin="round"/><path d="M2 16.400h18M2 13.400v6M20 13.400v6M8 13.800v5.200M14 13.800v5.200" stroke="#6a6a6a" stroke-width="0.9" fill="none"/></svg>
<svg class="b" style="left:602.5px;top:53.7px;overflow:visible;" width="22" height="22" viewBox="0 0 22 22"><path d="M1.600 6.400l5.200-4.200v2.600h8.400V2.200l5.200 4.200-5.200 4.200V8h-8.400v2.600z" fill="#8fd16f" stroke="#4f9a37" stroke-width="0.8" stroke-linejoin="round"/><path d="M2 16.400h11M2 13.400v6M8 13.800v5.200" stroke="#6a6a6a" stroke-width="0.9" fill="none"/></svg>
<div class="t" style="left:616.60px;top:57px;font-family:'Liberation Sans', sans-serif;font-size:12px;line-height:24px;color:#111;font-weight:700;">c</div>
<svg class="b" style="left:631.0px;top:53.7px;opacity:0.45;overflow:visible;" width="22" height="22" viewBox="0 0 22 22"><path d="M1.600 6.400l5.200-4.200v2.600h8.400V2.200l5.200 4.200-5.200 4.200V8h-8.400v2.600z" fill="#8fd16f" stroke="#4f9a37" stroke-width="0.8" stroke-linejoin="round"/><path d="M2 16.400h11M2 13.400v6M8 13.800v5.200" stroke="#6a6a6a" stroke-width="0.9" fill="none"/></svg>
<div class="t" style="left:646.50px;top:58px;font-family:'Liberation Serif', serif;font-size:11px;line-height:22px;color:#8a8a8a;font-weight:700;font-style:italic;">t</div>
<svg class="b" style="left:659.6px;top:53.7px;overflow:visible;" width="22" height="22" viewBox="0 0 22 22"><path d="M1.600 6.400l5.200-4.200v2.600h8.400V2.200l5.200 4.200-5.200 4.200V8h-8.400v2.600z" fill="#8fd16f" stroke="#4f9a37" stroke-width="0.8" stroke-linejoin="round"/><path d="M2 16.400h9M2 13.400v6M7 13.800v5.200" stroke="#6a6a6a" stroke-width="0.9" fill="none"/><path d="M11 16.600c1.600-2.400 3.200-3.200 4.800-3.200s3.200 0.800 4.800 3.200c-1.600 2.400-3.200 3.200-4.800 3.200s-3.200-0.800-4.800-3.200z" fill="#e9e9e9" stroke="#333" stroke-width="0.5"/><circle cx="15.800" cy="16.600" r="2.500" fill="#151515"/><circle cx="15" cy="15.800" r="0.800" fill="#fff"/></svg>
<svg class="b" style="left:990.5px;top:53.7px;overflow:visible;" width="22" height="22" viewBox="0 0 22 22"><path d="M4.500 4.500l13 13M17.500 4.500l-13 13" stroke="#444" stroke-width="1.100"/><g transform="translate(14.4 7.6) rotate(-45) scale(1)"><path d="M-1 0h4.500v-2.200l4.200 3.200-4.200 3.200V2h-4.500z" transform="translate(0 -1)" fill="#8fd16f" stroke="#4f9a37" stroke-width="0.7" stroke-linejoin="round"/></g><g transform="translate(7.6 7.6) rotate(-135) scale(1)"><path d="M-1 0h4.500v-2.200l4.200 3.200-4.200 3.200V2h-4.500z" transform="translate(0 -1)" fill="#8fd16f" stroke="#4f9a37" stroke-width="0.7" stroke-linejoin="round"/></g><g transform="translate(14.4 14.4) rotate(45) scale(1)"><path d="M-1 0h4.500v-2.200l4.200 3.200-4.200 3.200V2h-4.500z" transform="translate(0 -1)" fill="#8fd16f" stroke="#4f9a37" stroke-width="0.7" stroke-linejoin="round"/></g><g transform="translate(7.6 14.4) rotate(135) scale(1)"><path d="M-1 0h4.500v-2.200l4.200 3.200-4.200 3.200V2h-4.500z" transform="translate(0 -1)" fill="#8fd16f" stroke="#4f9a37" stroke-width="0.7" stroke-linejoin="round"/></g></svg>
<svg class="b" style="left:1018.5px;top:53.7px;overflow:visible;" width="22" height="22" viewBox="0 0 22 22"><g transform="translate(19.5 2.5) rotate(135) scale(0.85)"><path d="M-1 0h4.500v-2.200l4.200 3.200-4.200 3.200V2h-4.500z" transform="translate(0 -1)" fill="#8fd16f" stroke="#4f9a37" stroke-width="0.7" stroke-linejoin="round"/></g><g transform="translate(2.5 2.5) rotate(45) scale(0.85)"><path d="M-1 0h4.500v-2.200l4.200 3.200-4.200 3.200V2h-4.500z" transform="translate(0 -1)" fill="#8fd16f" stroke="#4f9a37" stroke-width="0.7" stroke-linejoin="round"/></g><g transform="translate(19.5 19.5) rotate(-135) scale(0.85)"><path d="M-1 0h4.500v-2.200l4.200 3.200-4.200 3.200V2h-4.500z" transform="translate(0 -1)" fill="#8fd16f" stroke="#4f9a37" stroke-width="0.7" stroke-linejoin="round"/></g><g transform="translate(2.5 19.5) rotate(-45) scale(0.85)"><path d="M-1 0h4.500v-2.200l4.200 3.200-4.200 3.200V2h-4.500z" transform="translate(0 -1)" fill="#8fd16f" stroke="#4f9a37" stroke-width="0.7" stroke-linejoin="round"/></g><circle cx="11" cy="11" r="3" fill="#2a8fc0" stroke="#1a6f9c" stroke-width="0.5"/></svg>
<svg class="b" style="left:1046.5px;top:53.7px;overflow:visible;" width="22" height="22" viewBox="0 0 22 22"><circle cx="11" cy="11" r="9.600" fill="#2a8db8" stroke="#1c6f94" stroke-width="0.8"/><g transform="translate(11 3.2) rotate(90) scale(0.6)"><path d="M-1 0h4.500v-2.200l4.200 3.200-4.200 3.200V2h-4.500z" transform="translate(0 -1)" fill="#8fd16f" stroke="#4f9a37" stroke-width="0.7" stroke-linejoin="round"/></g><g transform="translate(11 18.8) rotate(-90) scale(0.6)"><path d="M-1 0h4.500v-2.200l4.200 3.200-4.200 3.200V2h-4.500z" transform="translate(0 -1)" fill="#8fd16f" stroke="#4f9a37" stroke-width="0.7" stroke-linejoin="round"/></g><g transform="translate(3.2 11) rotate(0) scale(0.6)"><path d="M-1 0h4.500v-2.200l4.200 3.200-4.200 3.200V2h-4.500z" transform="translate(0 -1)" fill="#8fd16f" stroke="#4f9a37" stroke-width="0.7" stroke-linejoin="round"/></g><g transform="translate(18.8 11) rotate(180) scale(0.6)"><path d="M-1 0h4.500v-2.200l4.200 3.200-4.200 3.200V2h-4.500z" transform="translate(0 -1)" fill="#8fd16f" stroke="#4f9a37" stroke-width="0.7" stroke-linejoin="round"/></g><path d="M7.500 7.500l7 7M14.500 7.500l-7 7" stroke="#1c5f7c" stroke-width="0.9"/></svg>
<svg class="b" style="left:1118.4px;top:53.7px;overflow:visible;" width="22" height="22" viewBox="0 0 22 22"><path d="M7 19V5.500" stroke="#4f9a37" stroke-width="1.600"/><path d="M4 7l3-5 3 5z" fill="#8fd16f" stroke="#4f9a37" stroke-width="0.6"/><path d="M6 15.400h10" stroke="#c92a2a" stroke-width="1.600"/><path d="M15 12.400l5 3-5 3z" fill="#e03a3a"/><path d="M7 15.400l-4.500 4" stroke="#d9b32a" stroke-width="1.500"/><path d="M1 17.500l0.600 3.600 3.400-1.200z" fill="#e8c63a"/><path d="M11.500 5c1.400-2 2.800-2.700 4.200-2.700s2.800 0.700 4.200 2.700c-1.400 2-2.800 2.700-4.200 2.700S12.900 7 11.500 5z" fill="#f2f2f2" stroke="#555" stroke-width="0.5"/><circle cx="15.700" cy="5" r="2.100" fill="#4a3a9a"/><circle cx="15" cy="4.300" r="0.700" fill="#fff"/></svg>
<svg class="b" style="left:1169.5px;top:53.7px;overflow:visible;" width="22" height="22" viewBox="0 0 22 22"><path d="M11 3a5.600 5.600 0 0 0-3.400 10.100c0.800 0.700 1.200 1.500 1.200 2.500h4.400c0-1 0.400-1.800 1.200-2.500A5.600 5.600 0 0 0 11 3z" fill="#dedede" stroke="#909090" stroke-width="0.9"/><path d="M9 16.800h4M9.400 18.400h3.200" stroke="#9a9a9a" stroke-width="0.9" stroke-linecap="round"/></svg>
<svg class="b" style="left:490.0px;top:83.6px;overflow:visible;" width="22" height="22" viewBox="0 0 22 22"><rect x="3.600" y="1.800" width="14.800" height="18.400" rx="2" fill="#d4d4d4" stroke="#6f6f6f" stroke-width="1"/><rect x="5.600" y="3.800" width="10.800" height="3.600" rx="0.600" fill="#dfe9f3" stroke="#8aa" stroke-width="0.5"/><rect x="5.8" y="9.4" width="2.400" height="2.100" rx="0.500" fill="#555"/><rect x="9.7" y="9.4" width="2.400" height="2.100" rx="0.500" fill="#555"/><rect x="13.6" y="9.4" width="2.400" height="2.100" rx="0.500" fill="#555"/><rect x="5.8" y="12.8" width="2.400" height="2.100" rx="0.500" fill="#555"/><rect x="9.7" y="12.8" width="2.400" height="2.100" rx="0.500" fill="#555"/><rect x="13.6" y="12.8" width="2.400" height="2.100" rx="0.500" fill="#555"/><rect x="5.8" y="16.2" width="2.400" height="2.100" rx="0.500" fill="#555"/><rect x="9.7" y="16.2" width="2.400" height="2.100" rx="0.500" fill="#555"/><rect x="13.6" y="16.2" width="2.400" height="2.100" rx="0.500" fill="#555"/></svg>
<svg class="b" style="left:520.9px;top:83.6px;overflow:visible;" width="22" height="22" viewBox="0 0 22 22"><g transform="rotate(38 11 11)"><ellipse cx="11" cy="12.600" rx="9.600" ry="5.800" fill="#4f9a37"/><ellipse cx="11" cy="10" rx="9.600" ry="5.800" fill="#5db83d" stroke="#4f9a37" stroke-width="0.8"/><ellipse cx="11" cy="10" rx="6.400" ry="3.700" fill="#b9e6a3" stroke="#3f8a9a" stroke-width="0.7"/><ellipse cx="11" cy="10" rx="3.200" ry="1.700" fill="#8fd0e0" stroke="#3f8a9a" stroke-width="0.6"/></g></svg>
<svg class="b" style="left:552.2px;top:83.6px;overflow:visible;" width="22" height="22" viewBox="0 0 22 22"><path d="M2 6.200L8.600 2.400 14.500 4 9 8z" fill="#b9e6a3" stroke="#4f9a37" stroke-width="0.6"/><path d="M2 6.200L9 8v11.200L2 17z" fill="#8fd16f" stroke="#4f9a37" stroke-width="0.7"/><path d="M9 8l5.500-4v10.600L9 19.200z" fill="#6fbf4c" stroke="#4f9a37" stroke-width="0.6"/><path d="M2 6.200L8.600 2.400 20 5.400v11L13.400 20 2 17z" fill="none" stroke="#5d8a4a" stroke-width="0.9" stroke-linejoin="round"/><path d="M2 6.200l11.400 3 6.600-3.800M13.400 9.200V20" fill="none" stroke="#5d8a4a" stroke-width="0.9"/><path d="M8.600 2.400v10.800L2 17M8.600 13.200L20 16.400" fill="none" stroke="#5d8a4a" stroke-width="0.6" opacity="0.7"/></svg>
<svg class="b" style="left:582.8px;top:83.6px;overflow:visible;" width="22" height="22" viewBox="0 0 22 22"><path d="M2 6.200L8.600 2.400 20 5.400v11L13.400 20 2 17z" fill="none" stroke="#5d8a4a" stroke-width="0.9" stroke-linejoin="round"/><path d="M2 6.200l11.400 3 6.600-3.800M13.400 9.200V20" fill="none" stroke="#5d8a4a" stroke-width="0.9"/><path d="M8.600 2.400v10.800L2 17M8.600 13.200L20 16.400" fill="none" stroke="#5d8a4a" stroke-width="0.6" opacity="0.7"/><path d="M6.500 7.800l6.500-3.600v10.400l-6.500 3.600z" fill="#8fd16f" stroke="#4f9a37" stroke-width="0.7" stroke-linejoin="round" opacity="0.95"/></svg>
<svg class="b" style="left:613.7px;top:83.6px;overflow:visible;" width="22" height="22" viewBox="0 0 22 22"><path d="M2 6.200L8.600 2.400 20 5.400v11L13.400 20 2 17z" fill="none" stroke="#5d8a4a" stroke-width="0.9" stroke-linejoin="round"/><path d="M2 6.200l11.400 3 6.600-3.800M13.400 9.200V20" fill="none" stroke="#5d8a4a" stroke-width="0.9"/><path d="M8.600 2.400v10.800L2 17M8.600 13.200L20 16.400" fill="none" stroke="#5d8a4a" stroke-width="0.6" opacity="0.7"/><path d="M3 7.500l4.500 1.200v5L3 12.500z" fill="#5db83d" stroke="#4f9a37" stroke-width="0.5"/><path d="M8.500 5.500l3.500-1.800 3 0.800v4.800l-3-0.800-3.500 1.800z" fill="#8fd16f" stroke="#4f9a37" stroke-width="0.5"/><path d="M14 10.500l4.500-2.300v7.600L14 18z" fill="#5db83d" stroke="#4f9a37" stroke-width="0.5"/></svg>
<svg class="b" style="left:644.6px;top:83.6px;overflow:visible;" width="22" height="22" viewBox="0 0 22 22"><path d="M2 6.200L8.600 2.400 20 5.400v11L13.400 20 2 17z" fill="#d8edf7" stroke="#6a9ab0" stroke-width="0.9" stroke-linejoin="round"/><path d="M2 6.200l11.400 3 6.600-3.800M13.400 9.200V20" fill="none" stroke="#6a9ab0" stroke-width="0.8"/><path d="M6.200 7.800l3.600-2 5.200 1.400v5.600l-3.600 2-5.200-1.400z" fill="#8fd16f" stroke="#4f9a37" stroke-width="0.7" stroke-linejoin="round"/><path d="M6.200 7.800l5.200 1.400 3.600-2M11.400 9.200v5.600" fill="none" stroke="#4f9a37" stroke-width="0.7"/></svg>
<svg class="b" style="left:675.6px;top:83.6px;overflow:visible;" width="22" height="22" viewBox="0 0 22 22"><circle cx="11" cy="11" r="7.600" fill="#d4ecf7" stroke="#5a9ab5" stroke-width="0.9"/><circle cx="11" cy="11" r="4" fill="none" stroke="#5a9ab5" stroke-width="0.8"/><path d="M11 1l10 10-10 10L1 11z" fill="none" stroke="#4f9a37" stroke-width="1"/><circle cx="11" cy="1.8" r="1.350" fill="#8fd16f" stroke="#4f9a37" stroke-width="0.6"/><circle cx="20.2" cy="11" r="1.350" fill="#8fd16f" stroke="#4f9a37" stroke-width="0.6"/><circle cx="11" cy="20.2" r="1.350" fill="#8fd16f" stroke="#4f9a37" stroke-width="0.6"/><circle cx="1.8" cy="11" r="1.350" fill="#8fd16f" stroke="#4f9a37" stroke-width="0.6"/><circle cx="6.4" cy="6.4" r="1.350" fill="#8fd16f" stroke="#4f9a37" stroke-width="0.6"/><circle cx="15.6" cy="6.4" r="1.350" fill="#8fd16f" stroke="#4f9a37" stroke-width="0.6"/><circle cx="15.6" cy="15.6" r="1.350" fill="#8fd16f" stroke="#4f9a37" stroke-width="0.6"/><circle cx="6.4" cy="15.6" r="1.350" fill="#8fd16f" stroke="#4f9a37" stroke-width="0.6"/></svg>
<svg class="b" style="left:705.0px;top:83.6px;opacity:0.4;overflow:visible;" width="22" height="22" viewBox="0 0 22 22"><circle cx="8" cy="11" r="3.800" fill="#8fd16f" stroke="#4f9a37" stroke-width="0.8"/><path d="M1.500 4.500c4-2.500 8-2 11 0s5 1.500 8 0M1.500 17.500c4 2.500 8 2 11 0s5-1.500 8 0M14 8.500c2-0.500 4-0.500 6.500 0M14 13.500c2 0.500 4 0.500 6.500 0" fill="none" stroke="#4f9a37" stroke-width="0.9"/></svg>
<svg class="b" style="left:737.0px;top:83.6px;opacity:0.5;overflow:visible;" width="22" height="22" viewBox="0 0 22 22"><path d="M2.500 18.500V12c5-1 9-4 11-8.500l6 3c-0.500 4 0 8 0.500 12z" fill="#8fd16f" stroke="#4f9a37" stroke-width="0.9" stroke-linejoin="round"/><path d="M2.500 12l6 3c4-2 6-5 7-9" fill="none" stroke="#4f9a37" stroke-width="0.7"/></svg>
<svg class="b" style="left:768.7px;top:83.6px;overflow:visible;" width="22" height="22" viewBox="0 0 22 22"><circle cx="11" cy="11" r="9" fill="#e3e3e3" stroke="#5f5f5f" stroke-width="1.100"/><circle cx="13.400" cy="12.600" r="3.700" fill="#8fd16f" stroke="#4f9a37" stroke-width="0.8"/><circle cx="7" cy="7.600" r="2.200" fill="#b9e6a3" stroke="#5f5f5f" stroke-width="0.7"/><circle cx="6.600" cy="14.600" r="1.400" fill="#8fd16f" stroke="#4f9a37" stroke-width="0.6"/></svg>
<svg class="b" style="left:798.7px;top:83.6px;opacity:0.4;overflow:visible;" width="22" height="22" viewBox="0 0 22 22"><circle cx="12" cy="12.400" r="8" fill="#e3e3e3" stroke="#5f5f5f" stroke-width="1"/><circle cx="14.400" cy="13.600" r="3.300" fill="#8fd16f" stroke="#4f9a37" stroke-width="0.8"/><circle cx="3.600" cy="3.600" r="2.300" fill="#b9e6a3" stroke="#5f5f5f" stroke-width="0.7"/><circle cx="8" cy="16" r="1.300" fill="#8fd16f" stroke="#4f9a37" stroke-width="0.6"/></svg>
<svg class="b" style="left:836.0px;top:83.6px;overflow:visible;" width="22" height="22" viewBox="0 0 22 22"><path d="M5 4v13.500h13" fill="none" stroke="#4a8fb5" stroke-width="1.100"/><ellipse cx="12" cy="10.500" rx="1.800" ry="3.200" fill="#cfe6f3" stroke="#4a8fb5" stroke-width="0.9"/><path d="M12 5v2.300M12 13.700V17.500" stroke="#4a8fb5" stroke-width="0.9"/></svg>
<svg class="b" style="left:867.0px;top:83.6px;overflow:visible;" width="22" height="22" viewBox="0 0 22 22"><path d="M2.400 2.400h12.400v7.200h-5.200v5.200H2.400z" fill="#d8edf9" stroke="#5f7f95" stroke-width="1" stroke-linejoin="round"/><rect x="11.600" y="11.600" width="7.600" height="7.600" fill="#8fd16f" stroke="#4f9a37" stroke-width="0.9" stroke-dasharray="1.500 1.200"/></svg>
<svg class="b" style="left:898.0px;top:83.6px;overflow:visible;" width="22" height="22" viewBox="0 0 22 22"><path d="M3.200 2.500V19h16.500" fill="none" stroke="#555" stroke-width="1"/><rect x="4.6" y="12" width="2.300" height="6.399999999999999" fill="#2a3fb0"/><rect x="6.9" y="7" width="2.300" height="11.399999999999999" fill="#2f8fd0"/><rect x="9.2" y="3" width="2.300" height="15.399999999999999" fill="#39b7a0"/><rect x="11.5" y="8" width="2.300" height="10.399999999999999" fill="#6fca3a"/><rect x="13.8" y="11" width="2.300" height="7.399999999999999" fill="#d9d93a"/><rect x="16.1" y="14" width="2.300" height="4.399999999999999" fill="#f0a52a"/></svg>
<svg class="b" style="left:928.8px;top:83.6px;overflow:visible;" width="22" height="22" viewBox="0 0 22 22"><circle cx="6" cy="7" r="4.300" fill="#eef4fa" stroke="#5f7f95" stroke-width="0.9"/><path d="M6 4.300V7l2 1.200" fill="none" stroke="#5f7f95" stroke-width="0.8"/><circle cx="15.500" cy="7" r="4" fill="#c9a03a" stroke="#8f6f1f" stroke-width="0.8"/><circle cx="15.500" cy="7" r="1.800" fill="none" stroke="#8f6f1f" stroke-width="0.6"/><path d="M2 16.500h2l0.800-2.500 1 4.500 1-5.500 1 6 1-5 1 4 1-4.500 1 5 1-4 1 3 1-3.500 1 3 0.800-1.500h2" fill="none" stroke="#2f7fb5" stroke-width="0.9" stroke-linejoin="round"/><path d="M2 19.800h18" stroke="#2f7fb5" stroke-width="0.7"/></svg>
<svg class="b" style="left:959.5px;top:83.6px;overflow:visible;" width="22" height="22" viewBox="0 0 22 22"><path d="M2 4.500l16.500-1.500-3 14.500-10 2z" fill="#8fd16f" stroke="#4f9a37" stroke-width="0.9" stroke-linejoin="round"/><path d="M5 18l12-13.500 1.800 1.600-12 13.500-2.600 0.800z" fill="#6a8f4a" stroke="#3f5f2a" stroke-width="0.5"/><path d="M7 14l1.200-2 0.800 2.200 1.200-2.600 0.800 2.400 1.200-2.800 0.800 2.400 1.200-2.600" fill="none" stroke="#2f5f8f" stroke-width="0.7"/></svg>
<svg class="b" style="left:991.2px;top:83.6px;overflow:visible;" width="22" height="22" viewBox="0 0 22 22"><circle cx="6" cy="7" r="4.300" fill="#eef4fa" stroke="#5f7f95" stroke-width="0.9"/><path d="M6 4.300V7l2 1.200" fill="none" stroke="#5f7f95" stroke-width="0.8"/><rect x="11.500" y="3" width="8" height="8" fill="none" stroke="#4f9a37" stroke-width="0.7" stroke-dasharray="1.300 1.100"/><path d="M13.500 9.500l2-5 2 5M14.300 7.800h2.400" fill="none" stroke="#4f9a37" stroke-width="0.7"/><path d="M2 16.500h2l0.800-2.500 1 4.500 1-5.500 1 6 1-5 1 4 1-4.500 1 5 1-4 1 3 1-3.500 1 3 0.800-1.500h2" fill="none" stroke="#2f7fb5" stroke-width="0.9" stroke-linejoin="round"/><path d="M2 19.800h18" stroke="#2f7fb5" stroke-width="0.7"/></svg>
<svg class="b" style="left:1021.8px;top:83.6px;overflow:visible;" width="22" height="22" viewBox="0 0 22 22"><path d="M2.500 4.500L11 1.500l8.500 3v9.500c0 3.500-4.500 6-8.500 7-4-1-8.500-3.500-8.500-7z" fill="#e4f1f8" stroke="#c7dcea" stroke-width="0.8"/><path d="M11 4.500v13M5.400 7.800l11.200 6.400M16.600 7.800L5.400 14.200" stroke="#6ab0d8" stroke-width="1.300" stroke-linecap="round"/></svg>
<svg class="b" style="left:1053.0px;top:83.6px;overflow:visible;" width="22" height="22" viewBox="0 0 22 22"><path d="M6.500 2.500c-2.200 0-3 0.800-3 2.500v3.500c0 1.400-0.600 2.200-2 2.500 1.400 0.300 2 1.100 2 2.500V17c0 1.700 0.800 2.500 3 2.500M15.500 2.500c2.200 0 3 0.800 3 2.500v3.500c0 1.400 0.600 2.200 2 2.500-1.400 0.300-2 1.100-2 2.500V17c0 1.700-0.800 2.500-3 2.500" fill="none" stroke="#5f6f7a" stroke-width="1.200" stroke-linecap="round"/><circle cx="7.600" cy="16.800" r="1.100" fill="#3f9ab5"/><circle cx="11" cy="16.800" r="1.100" fill="#3f9ab5"/><circle cx="14.400" cy="16.800" r="1.100" fill="#3f9ab5"/></svg>
<svg class="b" style="left:1090.3px;top:83.6px;overflow:visible;" width="22" height="22" viewBox="0 0 22 22"><g transform="rotate(-38 11 11)"><rect x="-0.500" y="7.200" width="23" height="7.600" rx="0.800" fill="#f2c62a" stroke="#c79a1e" stroke-width="0.9"/><path d="M3 7.200v3M6 7.200v2M9 7.200v3M12 7.200v2M15 7.200v3M18 7.200v2M20.500 7.200v3" stroke="#a87a10" stroke-width="0.7"/></g></svg>
<svg class="b" style="left:1120.3px;top:83.6px;overflow:visible;" width="22" height="22" viewBox="0 0 22 22"><g transform="rotate(-28 11 11)"><path d="M0.500 14.500a10.500 10.500 0 0 1 21 0v3h-21z" fill="#f2c62a" stroke="#c79a1e" stroke-width="0.9" stroke-linejoin="round"/><path d="M5 14.500a6 6 0 0 1 12 0z" fill="#dedede" stroke="#c79a1e" stroke-width="0.8"/><path d="M11 14.500L11 5M11 14.500l6-6" stroke="#a87a10" stroke-width="0.6"/></g></svg>
<svg class="b" style="left:766.8px;top:128.3px;overflow:visible;" width="16" height="16" viewBox="0 0 16 16"><g transform="translate(2 2) scale(0.75)"><path d="M2 5h2.400l1-1.600h5.200l1 1.600H14v8.400H2z" fill="#cfcfcf" stroke="#8b8b8b" stroke-width="0.8" stroke-linejoin="round"/><circle cx="8" cy="9" r="2.700" fill="#f4f4f4" stroke="#8b8b8b" stroke-width="0.8"/><path d="M1.500 11.500l3.500-2.600v1.600c3 0 5 1 5.200 3.800-1-1.300-2.800-1.800-5.200-1.700v1.600z" fill="#d9263f" stroke="#a8102a" stroke-width="0.3"/></g></svg>
<svg class="b" style="left:785.5px;top:128.3px;opacity:0.6;overflow:visible;" width="16" height="16" viewBox="0 0 16 16"><g transform="translate(2 2) scale(0.75)"><path d="M2 5h2.400l1-1.600h5.200l1 1.600H14v8.400H2z" fill="#d6e8cf" stroke="#9fc98f" stroke-width="0.8" stroke-linejoin="round"/><circle cx="8" cy="9" r="2.700" fill="#f4f4f4" stroke="#9fc98f" stroke-width="0.8"/><path d="M14.500 11.500L11 8.900v1.600c-3 0-5 1-5.200 3.800 1-1.300 2.800-1.800 5.200-1.700v1.600z" fill="#b7dfa5"/></g></svg>
<svg class="b" style="left:809.0px;top:128.3px;overflow:visible;" width="16" height="16" viewBox="0 0 16 16"><g transform="translate(2 2) scale(0.75)"><path d="M2 5h2.400l1-1.600h5.200l1 1.600H14v8.400H2z" fill="#d9d9d9" stroke="#8b8b8b" stroke-width="0.8" stroke-linejoin="round"/><circle cx="8" cy="9" r="2.700" fill="#f4f4f4" stroke="#8b8b8b" stroke-width="0.8"/><path d="M0.800 3.500V1h2.500M12.700 1h2.500v2.500M15.200 12.500V15h-2.500M3.300 15H0.800v-2.500" fill="none" stroke="#8b8b8b" stroke-width="0.7" stroke-dasharray="1.200 1"/></g></svg>
<div class="t" style="left:834.27px;top:128px;font-family:'Liberation Sans', sans-serif;font-size:8.2px;line-height:19px;color:#666;font-weight:700;">3D</div>
<svg class="b" style="left:850.2px;top:128.3px;overflow:visible;" width="16" height="16" viewBox="0 0 16 16"><g transform="translate(2 2) scale(0.75)"><path d="M2 5h2.400l1-1.600h5.200l1 1.600H14v8.400H2z" fill="#d9d9d9" stroke="#8b8b8b" stroke-width="0.8" stroke-linejoin="round"/><circle cx="8" cy="9" r="2.700" fill="#f4f4f4" stroke="#8b8b8b" stroke-width="0.8"/><circle cx="9.500" cy="8.500" r="3.600" fill="#d9efd0" fill-opacity="0.85" stroke="#6aa84f" stroke-width="0.9"/><path d="M12 11.200l3.200 3.200" stroke="#c9a03a" stroke-width="1.700" stroke-linecap="round"/></g></svg>
<svg class="b" style="left:873.3px;top:128.3px;overflow:visible;" width="16" height="16" viewBox="0 0 16 16"><g transform="translate(2 2) scale(0.75)"><rect x="1.500" y="1.500" width="13" height="13" fill="none" stroke="#8b8b8b" stroke-width="0.7" stroke-dasharray="1.300 1.100"/><path d="M8 4l4 4-4 4-4-4z" fill="#8fd16f" stroke="#4f9a37" stroke-width="0.8"/><circle cx="8" cy="8" r="1.100" fill="#f5f5f5"/></g></svg>
<svg class="b" style="left:892.0px;top:128.3px;overflow:visible;" width="16" height="16" viewBox="0 0 16 16"><g transform="translate(2 2) scale(0.75)"><rect x="1.500" y="1.500" width="13" height="13" fill="none" stroke="#8b8b8b" stroke-width="0.7" stroke-dasharray="1.300 1.100"/><rect x="4" y="6.700" width="8" height="2.600" rx="0.500" fill="#d9263f"/></g></svg>
<svg class="b" style="left:910.8px;top:128.3px;overflow:visible;" width="16" height="16" viewBox="0 0 16 16"><g transform="translate(2 2) scale(0.75)"><rect x="1.500" y="1.500" width="13" height="13" fill="none" stroke="#8b8b8b" stroke-width="0.7" stroke-dasharray="1.300 1.100"/><path d="M8 2.500l3 3.500H9.200v2.500H6.800V6H5z" fill="#8fd16f" stroke="#4f9a37" stroke-width="0.6"/><rect x="4" y="10.300" width="7" height="2.200" fill="#d9263f"/><path d="M11.500 11.500l3.500 3.500" stroke="#555" stroke-width="1.100"/></g></svg>
<svg class="b" style="left:933.6px;top:128.3px;overflow:visible;" width="16" height="16" viewBox="0 0 16 16"><g transform="translate(2 2) scale(0.75)"><rect x="1.500" y="1.500" width="13" height="13" fill="none" stroke="#8b8b8b" stroke-width="0.7" stroke-dasharray="1.300 1.100"/><path d="M8 3.500l5 8.500H3z" fill="#8fd16f" stroke="#4f9a37" stroke-width="0.8" stroke-linejoin="round"/><path d="M11 11l3.500 3.500" stroke="#555" stroke-width="1"/></g></svg>
<svg class="b" style="left:952.5px;top:128.3px;overflow:visible;" width="16" height="16" viewBox="0 0 16 16"><g transform="translate(2 2) scale(0.75)"><rect x="1.500" y="1.500" width="13" height="13" fill="none" stroke="#8b8b8b" stroke-width="0.7" stroke-dasharray="1.300 1.100"/><circle cx="5" cy="5" r="0.900" fill="#444"/><circle cx="11" cy="5" r="0.900" fill="#444"/><circle cx="5" cy="11" r="0.900" fill="#444"/><circle cx="8" cy="8" r="0.900" fill="#444"/><path d="M10.500 10.500l4 4" stroke="#444" stroke-width="1"/></g></svg>
<svg class="b" style="left:973.0px;top:128.3px;overflow:visible;" width="16" height="16" viewBox="0 0 16 16"><g transform="translate(2 2) scale(0.75)"><path d="M2 6l6-3.500 6.500 1.500v5L8.500 12.500 2 11z" fill="#8fd16f" stroke="#4f9a37" stroke-width="0.8" stroke-linejoin="round"/><path d="M8 12.500l1 3M7 15.500h3" stroke="#4f9a37" stroke-width="0.9"/></g></svg>
<svg class="b" style="left:989.8px;top:128.3px;opacity:0.7;overflow:visible;" width="16" height="16" viewBox="0 0 16 16"><g transform="translate(2 2) scale(0.75)"><rect x="2" y="1.500" width="11" height="11" fill="none" stroke="#d9a0a8" stroke-width="0.7" stroke-dasharray="1.300 1.100"/><path d="M5 4l6 0M4 7.500h7M5 10h5" stroke="#e8b0b8" stroke-width="0.8"/><path d="M10.500 11l4 4" stroke="#b99a6a" stroke-width="1"/></g></svg>
<svg class="b" style="left:1008.4px;top:128.3px;opacity:0.75;overflow:visible;" width="16" height="16" viewBox="0 0 16 16"><g transform="translate(2 2) scale(0.75)"><rect x="2" y="1.500" width="11" height="11" fill="none" stroke="#a9cf9a" stroke-width="0.7" stroke-dasharray="1.300 1.100"/><path d="M7.500 3.500l3.500 6.500H4z" fill="#cfe8c4" stroke="#9fcf8a" stroke-width="0.7"/><path d="M10.500 11l4 4" stroke="#b99a6a" stroke-width="1"/></g></svg>
<svg class="b" style="left:1027.0px;top:128.3px;opacity:0.8;overflow:visible;" width="16" height="16" viewBox="0 0 16 16"><g transform="translate(2 2) scale(0.75)"><rect x="1.500" y="1.500" width="13" height="13" fill="none" stroke="#8b8b8b" stroke-width="0.7" stroke-dasharray="1.300 1.100"/><circle cx="5" cy="4.500" r="0.900" fill="#c9485a"/><circle cx="10.500" cy="5" r="0.900" fill="#555"/><circle cx="4.500" cy="10.500" r="0.900" fill="#555"/><circle cx="8" cy="8" r="0.900" fill="#c9485a"/><circle cx="11" cy="11" r="0.900" fill="#c9485a"/></g></svg>
<div class="b" style="left:478.7px;top:108.8px;width:284.3px;height:15.6px;background:#eaeaea;border-bottom:0.6px solid #d4d4d4;"></div>
<svg class="b" style="left:480.2px;top:111.7px;" width="9.4" height="9.4" viewBox="0 0 9.4 9.4"><circle cx="4.7" cy="4.7" r="4.4" fill="#3a3a3a"/><path d="M3 3l3.4 3.4M6.4 3L3 6.4" stroke="#ececec" stroke-width="1.15" stroke-linecap="round"/></svg>
<svg class="b" style="left:492.2px;top:111.7px;" width="9.4" height="9.4" viewBox="0 0 9.4 9.4"><circle cx="4.7" cy="4.7" r="4.4" fill="#3a3a3a"/><rect x="2.7" y="3.6" width="3.2" height="2.9" fill="none" stroke="#ececec" stroke-width="0.8"/><path d="M4 2.8h2.8v2.6" fill="none" stroke="#ececec" stroke-width="0.8"/></svg>
<div class="t" style="left:603.40px;top:107px;font-family:'Liberation Sans', sans-serif;font-size:8.3px;line-height:20px;color:#444;letter-spacing:-0.273px;-webkit-text-stroke:0.18px #444;">Pipeline Browser</div>
<div class="b" style="left:478.7px;top:124.4px;width:283.6px;height:54px;background:#ffffff;overflow:hidden;"></div>
<div class="b" style="left:496px;top:143.2px;width:94.5px;height:11.5px;background:#d5d5d5;"></div>
<div class="t" style="left:510.70px;top:124px;font-family:'Liberation Sans', sans-serif;font-size:9.3px;line-height:20px;color:#2b2b2b;letter-spacing:-0.142px;-webkit-text-stroke:0.18px #2b2b2b;">My Server (cs://localhost:11111)</div>
<div class="t" style="left:510.70px;top:139px;font-family:'Liberation Sans', sans-serif;font-size:9.3px;line-height:20px;color:#2b2b2b;letter-spacing:-0.361px;-webkit-text-stroke:0.18px #2b2b2b;">TIFFSeriesReader1</div>
<div class="t" style="left:522.70px;top:154px;font-family:'Liberation Sans', sans-serif;font-size:9.3px;line-height:20px;color:#2b2b2b;letter-spacing:-0.294px;-webkit-text-stroke:0.18px #2b2b2b;">Contour1</div>
<div class="b" style="left:478.7px;top:170px;width:274.3px;height:7.7px;overflow:hidden;"><div class="t" style="left:44.00000000000006px;top:3.1px;font-family:'Liberation Sans',sans-serif;font-size:9.3px;line-height:9.3px;color:#2b2b2b;letter-spacing:-0.05px;">IntegrateVariables2</div><div class="b" style="left:31.30000000000001px;top:4.5px;width:7px;height:7px;border:0.9px solid #8a8a8a;background:#e8e8e8;"></div><div class="b" style="left:4.300000000000011px;top:5.5px;width:9px;height:6px;border:0.8px solid #d5d5d5;border-radius:50%;"></div></div>
<svg class="b" style="left:498.6px;top:128.6px;" width="6" height="10.5" viewBox="0 0 6 10.5"><rect x="0.5" y="0.5" width="5" height="9.5" rx="0.7" fill="#8d8d8d" stroke="#3c3c3c" stroke-width="0.8"/><rect x="1.5" y="1.7" width="3" height="1.4" fill="#e5e5e5"/><rect x="1.5" y="4" width="3" height="1" fill="#4a4a4a"/></svg>
<div class="b" style="left:501.3px;top:124.4px;width:0.7px;height:4px;background:#9a9a9a;"></div>
<div class="b" style="left:501.3px;top:139.5px;width:0.7px;height:4px;background:#9a9a9a;"></div>
<div class="b" style="left:501.3px;top:154.5px;width:0.7px;height:24px;background:#b5b5b5;"></div>
<div class="b" style="left:505px;top:163.2px;width:4px;height:0.7px;background:#b5b5b5;"></div>
<svg class="b" style="left:496.3px;top:143.3px;" width="11" height="11" viewBox="0 0 11 11"><path d="M1 3.2L5.2 1.2 10 2.8 10 8 5.8 10 1 8.2z" fill="#5aa83c" stroke="#2f6a22" stroke-width="0.7" stroke-linejoin="round"/><path d="M1 3.2l4.8 1.7L10 2.8M5.8 4.9V10" fill="none" stroke="#2f6a22" stroke-width="0.7"/><path d="M1 3.2L5.2 1.2 10 2.8 5.8 4.9z" fill="#8fd06a"/></svg>
<svg class="b" style="left:508.4px;top:158.0px;" width="11" height="11" viewBox="0 0 11 11"><path d="M1 3.2L5.2 1.2 10 2.8 10 8 5.8 10 1 8.2z" fill="#5aa83c" stroke="#2f6a22" stroke-width="0.7" stroke-linejoin="round"/><path d="M1 3.2l4.8 1.7L10 2.8M5.8 4.9V10" fill="none" stroke="#2f6a22" stroke-width="0.7"/><path d="M1 3.2L5.2 1.2 10 2.8 5.8 4.9z" fill="#8fd06a"/></svg>
<svg class="b" style="left:497.8px;top:159.6px;" width="8" height="8" viewBox="0 0 8 8"><rect x="0.8" y="0.8" width="6.2" height="6.2" fill="#fff" stroke="#8a8a8a" stroke-width="0.7"/><path d="M2.3 3.9h3.2" stroke="#444" stroke-width="0.8"/></svg>
<svg class="b" style="left:482.8px;top:145.2px;" width="10" height="7" viewBox="0 0 10 7"><path d="M0.6 3.5C2 1.4 3.5 0.7 5 0.7s3 0.7 4.4 2.8C8 5.6 6.5 6.3 5 6.3S2 5.6 0.6 3.5z" fill="#cfd8ea" stroke="#9aa3b8" stroke-width="0.4"/><circle cx="5" cy="3.5" r="2.5" fill="#1d2f5c"/><circle cx="4.3" cy="2.7" r="0.8" fill="#dfe6f5"/></svg>
<svg class="b" style="left:482.8px;top:159.8px;" width="10" height="7" viewBox="0 0 10 7"><path d="M0.6 3.5C2 1.4 3.5 0.7 5 0.7s3 0.7 4.4 2.8C8 5.6 6.5 6.3 5 6.3S2 5.6 0.6 3.5z" fill="#cfd8ea" stroke="#9aa3b8" stroke-width="0.4"/><circle cx="5" cy="3.5" r="2.5" fill="#1d2f5c"/><circle cx="4.3" cy="2.7" r="0.8" fill="#dfe6f5"/></svg>
<div class="b" style="left:754.6px;top:127.4px;width:4.6px;height:27.2px;background:#595959;border-radius:2.3px;"></div>
<div class="b" style="left:478.7px;top:178.3px;width:284.3px;height:2.2px;background:#e3e3e3;border-top:0.7px solid #c4c4c4;"></div>
<div class="b" style="left:520.1px;top:181px;width:141.2px;height:11.9px;background:#ffffff;border-radius:3px 0 0 3px;"></div>
<div class="b" style="left:661.3px;top:181px;width:60.2px;height:11.9px;background:#dcdcdc;border-radius:0 3px 3px 0;"></div>
<div class="t" style="left:526.30px;top:177px;font-family:'Liberation Sans', sans-serif;font-size:9.2px;line-height:20px;color:#2a2a2a;letter-spacing:-0.077px;-webkit-text-stroke:0.18px #2a2a2a;">Color Map Editor</div>
<div class="t" style="left:610.50px;top:177px;font-family:'Liberation Sans', sans-serif;font-size:9.2px;line-height:20px;color:#2a2a2a;letter-spacing:0.013px;-webkit-text-stroke:0.18px #2a2a2a;">Properties</div>
<div class="t" style="left:669.50px;top:177px;font-family:'Liberation Sans', sans-serif;font-size:9.2px;line-height:20px;color:#2a2a2a;letter-spacing:0.012px;-webkit-text-stroke:0.18px #2a2a2a;">Information</div>
<div class="b" style="left:478.7px;top:193.5px;width:284.3px;height:13.4px;background:#eaeaea;border-bottom:0.6px solid #d6d6d6;"></div>
<svg class="b" style="left:480.2px;top:195.9px;" width="9.4" height="9.4" viewBox="0 0 9.4 9.4"><circle cx="4.7" cy="4.7" r="4.4" fill="#3a3a3a"/><path d="M3 3l3.4 3.4M6.4 3L3 6.4" stroke="#ececec" stroke-width="1.15" stroke-linecap="round"/></svg>
<svg class="b" style="left:492.2px;top:195.9px;" width="9.4" height="9.4" viewBox="0 0 9.4 9.4"><circle cx="4.7" cy="4.7" r="4.4" fill="#3a3a3a"/><rect x="2.7" y="3.6" width="3.2" height="2.9" fill="none" stroke="#ececec" stroke-width="0.8"/><path d="M4 2.8h2.8v2.6" fill="none" stroke="#ececec" stroke-width="0.8"/></svg>
<div class="t" style="left:612.40px;top:191px;font-family:'Liberation Sans', sans-serif;font-size:8.3px;line-height:20px;color:#444;letter-spacing:-0.147px;-webkit-text-stroke:0.18px #444;">Information</div>
<div class="t" style="left:487.10px;top:212px;font-family:'Liberation Sans', sans-serif;font-size:9.3px;line-height:20px;color:#151515;font-weight:700;letter-spacing:-0.120px;">File Properties</div>
<div class="b" style="left:487.1px;top:227.3px;width:256.79999999999995px;height:0.8px;background:#cfcfcf;"></div>
<div class="t" style="left:487.10px;top:233px;font-family:'Liberation Sans', sans-serif;font-size:9.2px;line-height:20px;color:#2c2c2c;letter-spacing:-0.304px;-webkit-text-stroke:0.18px #2c2c2c;">Name</div>
<div class="t" style="left:536.20px;top:233px;font-family:'Liberation Sans', sans-serif;font-size:9.2px;line-height:20px;color:#2c2c2c;letter-spacing:0.021px;-webkit-text-stroke:0.18px #2c2c2c;">tooth_103x94x161_uint8.tif</div>
<div class="t" style="left:487.10px;top:249px;font-family:'Liberation Sans', sans-serif;font-size:9.2px;line-height:20px;color:#2c2c2c;letter-spacing:-0.127px;-webkit-text-stroke:0.18px #2c2c2c;">Path</div>
<div class="t" style="left:536.20px;top:249px;font-family:'Liberation Sans', sans-serif;font-size:9.2px;line-height:20px;color:#2c2c2c;letter-spacing:-0.026px;-webkit-text-stroke:0.18px #2c2c2c;">/Users/liu42/gitRepo/LC/paraview_mcp/data</div>
<div class="t" style="left:487.10px;top:268px;font-family:'Liberation Sans', sans-serif;font-size:9.3px;line-height:20px;color:#151515;font-weight:700;letter-spacing:-0.205px;">Data Grouping</div>
<div class="b" style="left:487.1px;top:283.4px;width:256.79999999999995px;height:0.8px;background:#cfcfcf;"></div>
<div class="t" style="left:487.10px;top:289px;font-family:'Liberation Sans', sans-serif;font-size:9.2px;line-height:20px;color:#b9b9b9;letter-spacing:-0.201px;-webkit-text-stroke:0.18px #b9b9b9;">(n/a)</div>
<div class="t" style="left:487.10px;top:308px;font-family:'Liberation Sans', sans-serif;font-size:9.3px;line-height:20px;color:#151515;font-weight:700;letter-spacing:-0.059px;">Data Statistics</div>
<div class="b" style="left:487.1px;top:322.8px;width:256.79999999999995px;height:0.8px;background:#cfcfcf;"></div>
<div class="t" style="left:487.10px;top:328px;font-family:'Liberation Sans', sans-serif;font-size:9.2px;line-height:20px;color:#2c2c2c;letter-spacing:-0.255px;-webkit-text-stroke:0.18px #2c2c2c;">Type</div>
<div class="t" style="left:536.20px;top:328px;font-family:'Liberation Sans', sans-serif;font-size:9.2px;line-height:20px;color:#2c2c2c;letter-spacing:-0.070px;-webkit-text-stroke:0.18px #2c2c2c;">Image (Uniform Rectilinear Grid)</div>
<div class="t" style="left:487.10px;top:345px;font-family:'Liberation Sans', sans-serif;font-size:9.2px;line-height:20px;color:#2c2c2c;letter-spacing:-0.041px;-webkit-text-stroke:0.18px #2c2c2c;"># of Cells</div>
<div class="t" style="left:536.20px;top:345px;font-family:'Liberation Sans', sans-serif;font-size:9.2px;line-height:20px;color:#2c2c2c;letter-spacing:-0.397px;-webkit-text-stroke:0.18px #2c2c2c;">1,517,760</div>
<div class="t" style="left:487.10px;top:361px;font-family:'Liberation Sans', sans-serif;font-size:9.2px;line-height:20px;color:#2c2c2c;letter-spacing:-0.029px;-webkit-text-stroke:0.18px #2c2c2c;"># of Points</div>
<div class="t" style="left:536.20px;top:361px;font-family:'Liberation Sans', sans-serif;font-size:9.2px;line-height:20px;color:#2c2c2c;letter-spacing:0.008px;-webkit-text-stroke:0.18px #2c2c2c;">1,558,802 (Undefined)</div>
<div class="t" style="left:487.10px;top:377px;font-family:'Liberation Sans', sans-serif;font-size:9.2px;line-height:20px;color:#2c2c2c;letter-spacing:-0.062px;-webkit-text-stroke:0.18px #2c2c2c;">Memory:</div>
<div class="t" style="left:536.20px;top:377px;font-family:'Liberation Sans', sans-serif;font-size:9.2px;line-height:20px;color:#2c2c2c;letter-spacing:-0.171px;-webkit-text-stroke:0.18px #2c2c2c;">1.4873 MB</div>
<div class="t" style="left:487.10px;top:393px;font-family:'Liberation Sans', sans-serif;font-size:9.2px;line-height:20px;color:#2c2c2c;letter-spacing:-0.162px;-webkit-text-stroke:0.18px #2c2c2c;">Bounds</div>
<div class="t" style="left:536.20px;top:393px;font-family:'Liberation Sans', sans-serif;font-size:9.2px;line-height:20px;color:#2c2c2c;letter-spacing:-0.064px;-webkit-text-stroke:0.18px #2c2c2c;">0 to 102 (delta: 102)</div>
<div class="t" style="left:536.20px;top:404px;font-family:'Liberation Sans', sans-serif;font-size:9.2px;line-height:20px;color:#2c2c2c;letter-spacing:0.083px;-webkit-text-stroke:0.18px #2c2c2c;">0 to 93 (delta: 93)</div>
<div class="t" style="left:536.20px;top:415px;font-family:'Liberation Sans', sans-serif;font-size:9.2px;line-height:20px;color:#2c2c2c;letter-spacing:-0.031px;-webkit-text-stroke:0.18px #2c2c2c;">0 to 160 (delta: 160)</div>
<div class="t" style="left:487.10px;top:431px;font-family:'Liberation Sans', sans-serif;font-size:9.2px;line-height:20px;color:#2c2c2c;letter-spacing:-0.106px;-webkit-text-stroke:0.18px #2c2c2c;">Extents</div>
<div class="t" style="left:536.20px;top:431px;font-family:'Liberation Sans', sans-serif;font-size:9.2px;line-height:20px;color:#2c2c2c;letter-spacing:-0.060px;-webkit-text-stroke:0.18px #2c2c2c;">0 to 102 (dimension: 103)</div>
<div class="t" style="left:536.20px;top:442px;font-family:'Liberation Sans', sans-serif;font-size:9.2px;line-height:20px;color:#2c2c2c;letter-spacing:0.049px;-webkit-text-stroke:0.18px #2c2c2c;">0 to 93 (dimension: 94)</div>
<div class="t" style="left:536.20px;top:452px;font-family:'Liberation Sans', sans-serif;font-size:9.2px;line-height:20px;color:#2c2c2c;letter-spacing:-0.092px;-webkit-text-stroke:0.18px #2c2c2c;">0 to 160 (dimension: 161)</div>
<div class="t" style="left:487.10px;top:471px;font-family:'Liberation Sans', sans-serif;font-size:9.3px;line-height:20px;color:#151515;font-weight:700;letter-spacing:-0.114px;">Data Arrays</div>
<div class="b" style="left:487.1px;top:486.8px;width:256.79999999999995px;height:0.8px;background:#cfcfcf;"></div>
<div class="b" style="left:487.1px;top:496.5px;width:256.79999999999995px;height:160.4px;background:#ffffff;border:0.6px solid #d0d0d0;"></div>
<div class="b" style="left:487.1px;top:496.5px;width:256.79999999999995px;height:11.1px;background:#e9e9e9;border:0.6px solid #cbcbcb;"></div>
<div class="b" style="left:557.9px;top:497.5px;width:0.7px;height:9.5px;background:#c4c4c4;"></div>
<div class="b" style="left:622.3px;top:497.5px;width:0.7px;height:9.5px;background:#c4c4c4;"></div>
<div class="t" style="left:511.58px;top:493px;font-family:'Liberation Sans', sans-serif;font-size:8.2px;line-height:19px;color:#3a3a3a;-webkit-text-stroke:0.18px #3a3a3a;">Name</div>
<div class="t" style="left:581.62px;top:493px;font-family:'Liberation Sans', sans-serif;font-size:8.2px;line-height:19px;color:#3a3a3a;-webkit-text-stroke:0.18px #3a3a3a;">Type</div>
<div class="t" style="left:668.88px;top:493px;font-family:'Liberation Sans', sans-serif;font-size:8.2px;line-height:19px;color:#3a3a3a;-webkit-text-stroke:0.18px #3a3a3a;">Ranges</div>
<div class="b" style="left:487.70000000000005px;top:521.8px;width:255.59999999999997px;height:13.400000000000091px;background:#ebebeb;"></div>
<div class="b" style="left:487.70000000000005px;top:548.9px;width:255.59999999999997px;height:13.0px;background:#ebebeb;"></div>
<div class="b" style="left:487.70000000000005px;top:576px;width:255.59999999999997px;height:13.399999999999977px;background:#ebebeb;"></div>
<div class="b" style="left:487.70000000000005px;top:603px;width:255.59999999999997px;height:13.299999999999955px;background:#ebebeb;"></div>
<div class="b" style="left:487.70000000000005px;top:630px;width:255.59999999999997px;height:13.299999999999955px;background:#ebebeb;"></div>
<div class="b" style="left:495.4px;top:514.2px;width:2.2px;height:2.2px;background:#a5a548;border-radius:50%;"></div>
<div class="t" style="left:506.00px;top:506px;font-family:'Liberation Sans', sans-serif;font-size:9.2px;line-height:20px;color:#3f9f3f;letter-spacing:-0.038px;-webkit-text-stroke:0.18px #3f9f3f;">Tiff Scalars</div>
<div class="t" style="left:561.40px;top:506px;font-family:'Liberation Sans', sans-serif;font-size:9.2px;line-height:20px;color:#3f9f3f;letter-spacing:-0.025px;-webkit-text-stroke:0.18px #3f9f3f;">unsigned char</div>
<div class="t" style="left:626.60px;top:506px;font-family:'Liberation Sans', sans-serif;font-size:9.2px;line-height:20px;color:#3f9f3f;letter-spacing:0.118px;-webkit-text-stroke:0.18px #3f9f3f;">[0, 255]</div>
<div class="t" style="left:487.10px;top:661px;font-family:'Liberation Sans', sans-serif;font-size:9.3px;line-height:20px;color:#151515;font-weight:700;letter-spacing:-0.083px;">Time</div>
<div class="b" style="left:487.1px;top:676.6px;width:256.79999999999995px;height:0.8px;background:#cfcfcf;"></div>
<div class="b" style="left:486.1px;top:686.4px;width:258.79999999999995px;height:6.2px;overflow:hidden;"><div class="b" style="left:0;top:0;width:258.79999999999995px;height:12px;background:#e9e9e9;border:0.7px solid #c6c6c6;border-radius:2px;"></div><div class="b" style="left:68.5px;top:1.5px;width:0.7px;height:9px;background:#c4c4c4;"></div><div class="t" style="left:26.5px;top:2.4px;font-family:'Liberation Sans',sans-serif;font-size:8.2px;line-height:8.2px;color:#3a3a3a;">Index</div><div class="t" style="left:154.5px;top:2.4px;font-family:'Liberation Sans',sans-serif;font-size:8.2px;line-height:8.2px;color:#3a3a3a;">Time</div></div>
<div class="b" style="left:745.6px;top:212px;width:8.8px;height:480.5px;background:#f6f6f6;"></div>
<div class="b" style="left:747px;top:219px;width:6px;height:451px;background:#696969;border-radius:3px;"></div>
<div class="b" style="left:754.4px;top:208px;width:8.6px;height:491.5px;background:#e6e6e6;"></div>
<div class="b" style="left:762.3px;top:109px;width:1.2px;height:590.5px;background:#c6c6c6;"></div>
<div class="b" style="left:764.0px;top:145.7px;width:440.20000000000005px;height:554.7px;background:#bccaf4;"></div>
<div class="b" style="left:765.7px;top:147px;width:436.0999999999999px;height:550.7px;background:#36447f;"></div>
<div class="b" style="left:767px;top:148.2px;width:433.5999999999999px;height:548.2px;background:#9fb3ee;"></div>
<div class="b" style="left:768px;top:149.2px;width:431.70000000000005px;height:546.2px;background:#474c66;"></div>
<svg class="b" style="left:768px;top:149.2px;" width="431.70000000000005" height="546.2" viewBox="0 0 431.70000000000005 546.2"><defs>
<linearGradient id="tg" gradientUnits="userSpaceOnUse" x1="129" y1="150.8" x2="303" y2="190.8">
<stop offset="0" stop-color="#b80d1e"/><stop offset="0.2" stop-color="#a80b1b"/><stop offset="0.45" stop-color="#940918"/><stop offset="0.7" stop-color="#8a0816"/><stop offset="0.9" stop-color="#920917"/><stop offset="1" stop-color="#9c0a19"/>
</linearGradient>
<clipPath id="tc"><path d="M152.6 120.2C155.0 117.9 156.0 117.6 158.0 116.8C160.0 116.0 162.3 115.5 164.3 115.2C166.3 114.9 168.0 114.8 170.0 115.0C172.0 115.2 174.3 115.5 176.0 116.4C177.7 117.3 178.8 118.9 180.0 120.3C181.2 121.7 181.6 123.6 183.3 124.6C185.0 125.6 187.6 125.8 190.0 126.3C192.4 126.8 195.6 126.9 197.9 127.5C200.2 128.1 201.8 128.9 204.0 129.8C206.2 130.7 208.7 132.8 211.0 132.7C213.3 132.6 215.8 130.7 218.0 129.3C220.2 127.9 222.3 126.4 224.1 124.6C225.9 122.9 227.3 120.5 229.0 118.8C230.7 117.1 232.5 115.3 234.3 114.3C236.1 113.3 238.0 113.0 240.0 112.8C242.0 112.6 243.8 112.5 246.0 112.9C248.2 113.3 250.8 114.3 253.0 115.3C255.2 116.3 257.1 117.7 259.1 118.7C261.1 119.7 263.0 120.3 265.0 121.3C267.0 122.3 268.8 122.8 270.8 124.6C272.8 126.4 275.0 129.4 277.0 132.3C279.0 135.2 280.9 138.7 282.5 142.1C284.1 145.5 285.3 148.9 286.5 152.8C287.7 156.7 288.8 160.4 289.7 165.4C290.6 170.4 291.2 176.6 291.8 182.9C292.4 189.2 293.6 196.0 293.5 203.3C293.4 210.6 292.3 219.4 291.2 226.7C290.1 234.0 287.8 241.8 286.8 247.1C285.8 252.5 285.2 254.9 285.0 258.8C284.8 262.7 284.7 266.6 285.4 270.4C286.1 274.2 287.5 277.9 289.0 281.8C290.5 285.8 292.3 288.2 294.1 294.1C295.9 300.1 298.5 307.8 300.0 317.5C301.5 327.2 302.9 342.8 302.9 352.5C302.9 362.2 301.7 369.7 300.0 375.8C298.3 381.9 295.5 385.7 292.5 389.3C289.5 392.9 285.4 395.1 282.0 397.3C278.6 399.5 275.5 400.7 272.0 402.3C268.5 403.9 264.1 406.8 261.0 407.0C257.9 407.3 255.4 405.7 253.5 403.8C251.6 401.9 250.8 398.8 249.5 395.8C248.2 392.8 247.3 390.1 245.5 385.8C243.7 381.5 241.3 374.8 238.7 370.0C236.1 365.2 231.9 356.8 229.9 356.8C227.9 356.8 227.5 363.9 227.0 370.0C226.5 376.1 227.5 386.7 227.0 393.3C226.5 399.9 225.3 406.2 224.1 409.4C222.9 412.7 221.7 413.5 219.7 412.8C217.8 412.1 215.1 409.2 212.4 405.0C209.7 400.8 207.1 394.3 203.7 387.5C200.3 380.7 195.9 371.9 192.0 364.1C188.1 356.3 183.5 348.6 180.3 340.8C177.1 333.0 175.2 324.8 173.0 317.5C170.8 310.2 169.4 303.9 167.2 297.1C165.0 290.3 162.1 281.3 159.9 276.6C157.7 271.9 155.9 272.8 154.0 268.8C152.1 264.8 150.7 259.5 148.3 252.8C145.9 246.1 142.2 236.6 139.5 228.8C136.8 221.0 133.9 213.8 132.2 206.2C130.5 198.6 129.4 190.2 129.3 182.9C129.1 175.6 130.1 168.8 131.3 162.5C132.5 156.2 134.5 150.3 136.6 145.0C138.7 139.7 141.2 134.5 143.9 130.4C146.6 126.3 150.2 122.5 152.6 120.2Z"/></clipPath>
<filter id="bl" x="-100%" y="-100%" width="300%" height="300%"><feGaussianBlur stdDeviation="9"/></filter>
<filter id="bx" x="-100%" y="-100%" width="300%" height="300%"><feGaussianBlur stdDeviation="16"/></filter>
<filter id="bm" x="-100%" y="-100%" width="300%" height="300%"><feGaussianBlur stdDeviation="5"/></filter>
<filter id="bl2" x="-100%" y="-100%" width="300%" height="300%"><feGaussianBlur stdDeviation="2.4"/></filter>
</defs><defs><radialGradient id="g0"><stop offset="0" stop-color="#c40e20" stop-opacity="0.8"/><stop offset="0.35" stop-color="#c40e20" stop-opacity="0.640"/><stop offset="0.65" stop-color="#c40e20" stop-opacity="0.280"/><stop offset="0.85" stop-color="#c40e20" stop-opacity="0.080"/><stop offset="1" stop-color="#c40e20" stop-opacity="0"/></radialGradient><radialGradient id="g1"><stop offset="0" stop-color="#a80a1b" stop-opacity="0.8"/><stop offset="0.35" stop-color="#a80a1b" stop-opacity="0.640"/><stop offset="0.65" stop-color="#a80a1b" stop-opacity="0.280"/><stop offset="0.85" stop-color="#a80a1b" stop-opacity="0.080"/><stop offset="1" stop-color="#a80a1b" stop-opacity="0"/></radialGradient><radialGradient id="g2"><stop offset="0" stop-color="#a0091a" stop-opacity="0.5"/><stop offset="0.35" stop-color="#a0091a" stop-opacity="0.400"/><stop offset="0.65" stop-color="#a0091a" stop-opacity="0.175"/><stop offset="0.85" stop-color="#a0091a" stop-opacity="0.050"/><stop offset="1" stop-color="#a0091a" stop-opacity="0"/></radialGradient><radialGradient id="g3"><stop offset="0" stop-color="#960918" stop-opacity="0.45"/><stop offset="0.35" stop-color="#960918" stop-opacity="0.360"/><stop offset="0.65" stop-color="#960918" stop-opacity="0.158"/><stop offset="0.85" stop-color="#960918" stop-opacity="0.045"/><stop offset="1" stop-color="#960918" stop-opacity="0"/></radialGradient><radialGradient id="g4"><stop offset="0" stop-color="#58020e" stop-opacity="0.5"/><stop offset="0.35" stop-color="#58020e" stop-opacity="0.400"/><stop offset="0.65" stop-color="#58020e" stop-opacity="0.175"/><stop offset="0.85" stop-color="#58020e" stop-opacity="0.050"/><stop offset="1" stop-color="#58020e" stop-opacity="0"/></radialGradient><radialGradient id="g5"><stop offset="0" stop-color="#94091a" stop-opacity="0.6"/><stop offset="0.35" stop-color="#94091a" stop-opacity="0.480"/><stop offset="0.65" stop-color="#94091a" stop-opacity="0.210"/><stop offset="0.85" stop-color="#94091a" stop-opacity="0.060"/><stop offset="1" stop-color="#94091a" stop-opacity="0"/></radialGradient><radialGradient id="g6"><stop offset="0" stop-color="#80061a" stop-opacity="0.4"/><stop offset="0.35" stop-color="#80061a" stop-opacity="0.320"/><stop offset="0.65" stop-color="#80061a" stop-opacity="0.140"/><stop offset="0.85" stop-color="#80061a" stop-opacity="0.040"/><stop offset="1" stop-color="#80061a" stop-opacity="0"/></radialGradient><radialGradient id="g7"><stop offset="0" stop-color="#a00a1b" stop-opacity="0.6"/><stop offset="0.35" stop-color="#a00a1b" stop-opacity="0.480"/><stop offset="0.65" stop-color="#a00a1b" stop-opacity="0.210"/><stop offset="0.85" stop-color="#a00a1b" stop-opacity="0.060"/><stop offset="1" stop-color="#a00a1b" stop-opacity="0"/></radialGradient><radialGradient id="g8"><stop offset="0" stop-color="#b40d1f" stop-opacity="0.85"/><stop offset="0.35" stop-color="#b40d1f" stop-opacity="0.680"/><stop offset="0.65" stop-color="#b40d1f" stop-opacity="0.297"/><stop offset="0.85" stop-color="#b40d1f" stop-opacity="0.085"/><stop offset="1" stop-color="#b40d1f" stop-opacity="0"/></radialGradient><radialGradient id="g9"><stop offset="0" stop-color="#aa0c1d" stop-opacity="0.8"/><stop offset="0.35" stop-color="#aa0c1d" stop-opacity="0.640"/><stop offset="0.65" stop-color="#aa0c1d" stop-opacity="0.280"/><stop offset="0.85" stop-color="#aa0c1d" stop-opacity="0.080"/><stop offset="1" stop-color="#aa0c1d" stop-opacity="0"/></radialGradient><radialGradient id="g10"><stop offset="0" stop-color="#a40b1c" stop-opacity="0.75"/><stop offset="0.35" stop-color="#a40b1c" stop-opacity="0.600"/><stop offset="0.65" stop-color="#a40b1c" stop-opacity="0.262"/><stop offset="0.85" stop-color="#a40b1c" stop-opacity="0.075"/><stop offset="1" stop-color="#a40b1c" stop-opacity="0"/></radialGradient><radialGradient id="g11"><stop offset="0" stop-color="#4c000b" stop-opacity="0.6"/><stop offset="0.35" stop-color="#4c000b" stop-opacity="0.480"/><stop offset="0.65" stop-color="#4c000b" stop-opacity="0.210"/><stop offset="0.85" stop-color="#4c000b" stop-opacity="0.060"/><stop offset="1" stop-color="#4c000b" stop-opacity="0"/></radialGradient></defs><path d="M77.7 107.6L189.3 125.0" stroke="#b6bacb" stroke-width="0.8" fill="none"/><path d="M189.3 125.0L353.3 116.4" stroke="#b6bacb" stroke-width="0.8" fill="none"/><path d="M189.3 125.0L185.6 407.3" stroke="#b6bacb" stroke-width="0.8" fill="none"/><path d="M75.3 434.2L185.6 407.3" stroke="#b6bacb" stroke-width="0.8" fill="none"/><path d="M185.6 407.3L346.6 429.8" stroke="#b6bacb" stroke-width="0.8" fill="none"/><g clip-path="url(#tc)">
<rect x="0" y="0" width="431.70000000000005" height="546.2" fill="url(#tg)"/>
<ellipse cx="162.0" cy="136.8" rx="60.8" ry="41.8" fill="url(#g0)" transform="rotate(0 162.0 136.8)"/>
<ellipse cx="244.0" cy="129.8" rx="57.0" ry="30.4" fill="url(#g1)" transform="rotate(0 244.0 129.8)"/>
<ellipse cx="192.0" cy="150.8" rx="133.0" ry="22.8" fill="url(#g2)" transform="rotate(0 192.0 150.8)"/>
<ellipse cx="137.0" cy="195.8" rx="15.2" ry="104.5" fill="url(#g3)" transform="rotate(-6 137.0 195.8)"/>
<ellipse cx="220.0" cy="235.8" rx="88.0" ry="121.0" fill="url(#g4)" transform="rotate(0 220.0 235.8)"/>
<ellipse cx="278.0" cy="222.8" rx="22.8" ry="38.0" fill="url(#g5)" transform="rotate(0 278.0 222.8)"/>
<ellipse cx="284.0" cy="170.8" rx="19.0" ry="76.0" fill="url(#g6)" transform="rotate(0 284.0 170.8)"/>
<ellipse cx="170.0" cy="290.8" rx="22.8" ry="76.0" fill="url(#g7)" transform="rotate(-20 170.0 290.8)"/>
<ellipse cx="196.0" cy="348.8" rx="17.1" ry="80.6" fill="url(#g8)" transform="rotate(-24 196.0 348.8)"/>
<ellipse cx="286.0" cy="340.8" rx="17.1" ry="83.7" fill="url(#g9)" transform="rotate(3 286.0 340.8)"/>
<ellipse cx="266.0" cy="390.8" rx="31.0" ry="18.6" fill="url(#g10)" transform="rotate(0 266.0 390.8)"/>
<ellipse cx="244.0" cy="320.8" rx="20.2" ry="77.5" fill="url(#g11)" transform="rotate(-16 244.0 320.8)"/>
<path d="M190.0 270.8C204.0 312.8 220.0 346.8 230.0 358.8" stroke="#4a000a" stroke-width="5" fill="none" opacity="0.5" filter="url(#bl2)"/>
<path d="M230.0 358.8C236.0 372.8 242.0 390.8 251.0 403.8" stroke="#4a000a" stroke-width="4" fill="none" opacity="0.5" filter="url(#bl2)"/>
<path d="M284.0 268.8C293.0 300.8 297.0 350.8 289.0 390.8" stroke="#5a020d" stroke-width="2.5" fill="none" opacity="0.35" filter="url(#bl2)"/>
<path d="M178.0 118.8C184.0 132.8 189.0 145.8 192.0 162.8" stroke="#7c0512" stroke-width="5" fill="none" opacity="0.35" filter="url(#bl2)"/>
<path d="M211.0 133.8C214.0 145.8 216.0 155.8 218.0 168.8" stroke="#700410" stroke-width="6" fill="none" opacity="0.35" filter="url(#bl2)"/>
</g><path d="M77.7 107.6L257.1 96.0" stroke="#b6bacb" stroke-width="0.8" fill="none"/><path d="M257.1 96.0L353.3 116.4" stroke="#b6bacb" stroke-width="0.8" fill="none"/><path d="M77.7 107.6L75.3 434.2" stroke="#b6bacb" stroke-width="0.8" fill="none"/><path d="M353.3 116.4L346.6 429.8" stroke="#b6bacb" stroke-width="0.8" fill="none"/><path d="M75.3 434.2L251.2 463.9" stroke="#b6bacb" stroke-width="0.8" fill="none"/><path d="M251.2 463.9L346.6 429.8" stroke="#b6bacb" stroke-width="0.8" fill="none"/><path d="M257.1 96.0L251.2 463.9" stroke="#b6bacb" stroke-width="0.8" fill="none"/><g clip-path="url(#tc)"><path d="M257.1 96.0L251.2 463.9" stroke="#dc5f76" stroke-width="0.8" fill="none"/></g><path d="M68.6 478.1L68.6 447.8" stroke="#4fb44f" stroke-width="0.8" opacity="0.8"/>
<path d="M65.6 449.0L69.4 441.0L71.6 449.0Z" fill="#35d435"/>
<path d="M68.6 478.2L82.0 478.2" stroke="#d8c08a" stroke-width="0.9"/>
<circle cx="83.39999999999998" cy="478.2" r="2.4" fill="#ecc81e"/>
<path d="M67.5 478.7L71.0 478.7" stroke="#b8404a" stroke-width="0.8" opacity="0.8"/>
<ellipse cx="97.20000000000005" cy="480.2" rx="3.9" ry="2.5" fill="#e01515"/></svg>
<div class="t" style="left:837.93px;top:582px;font-family:'Liberation Sans', sans-serif;font-size:12px;line-height:24px;color:#f6f6f6;">Z</div>
<div class="t" style="left:852.33px;top:613px;font-family:'Liberation Sans', sans-serif;font-size:11.6px;line-height:22px;color:#f6f6f6;">Y</div>
<div class="t" style="left:864.93px;top:615px;font-family:'Liberation Sans', sans-serif;font-size:11.6px;line-height:22px;color:#f6f6f6;">X</div>
<div class="b" style="left:479.2px;top:2px;width:13px;height:718px;background:linear-gradient(90deg,rgba(0,0,0,0.26),rgba(0,0,0,0.15) 18%,rgba(0,0,0,0.07) 45%,rgba(0,0,0,0.02) 75%,rgba(0,0,0,0));border-radius:7px 0 0 4px;"></div>
<div class="b" style="left:1204.2px;top:0px;width:76px;height:720px;background:#000;"></div>
<div class="b" style="left:1203.6px;top:0px;width:1px;height:720px;background:rgba(0,0,0,0.45);"></div>
</div></body></html>
